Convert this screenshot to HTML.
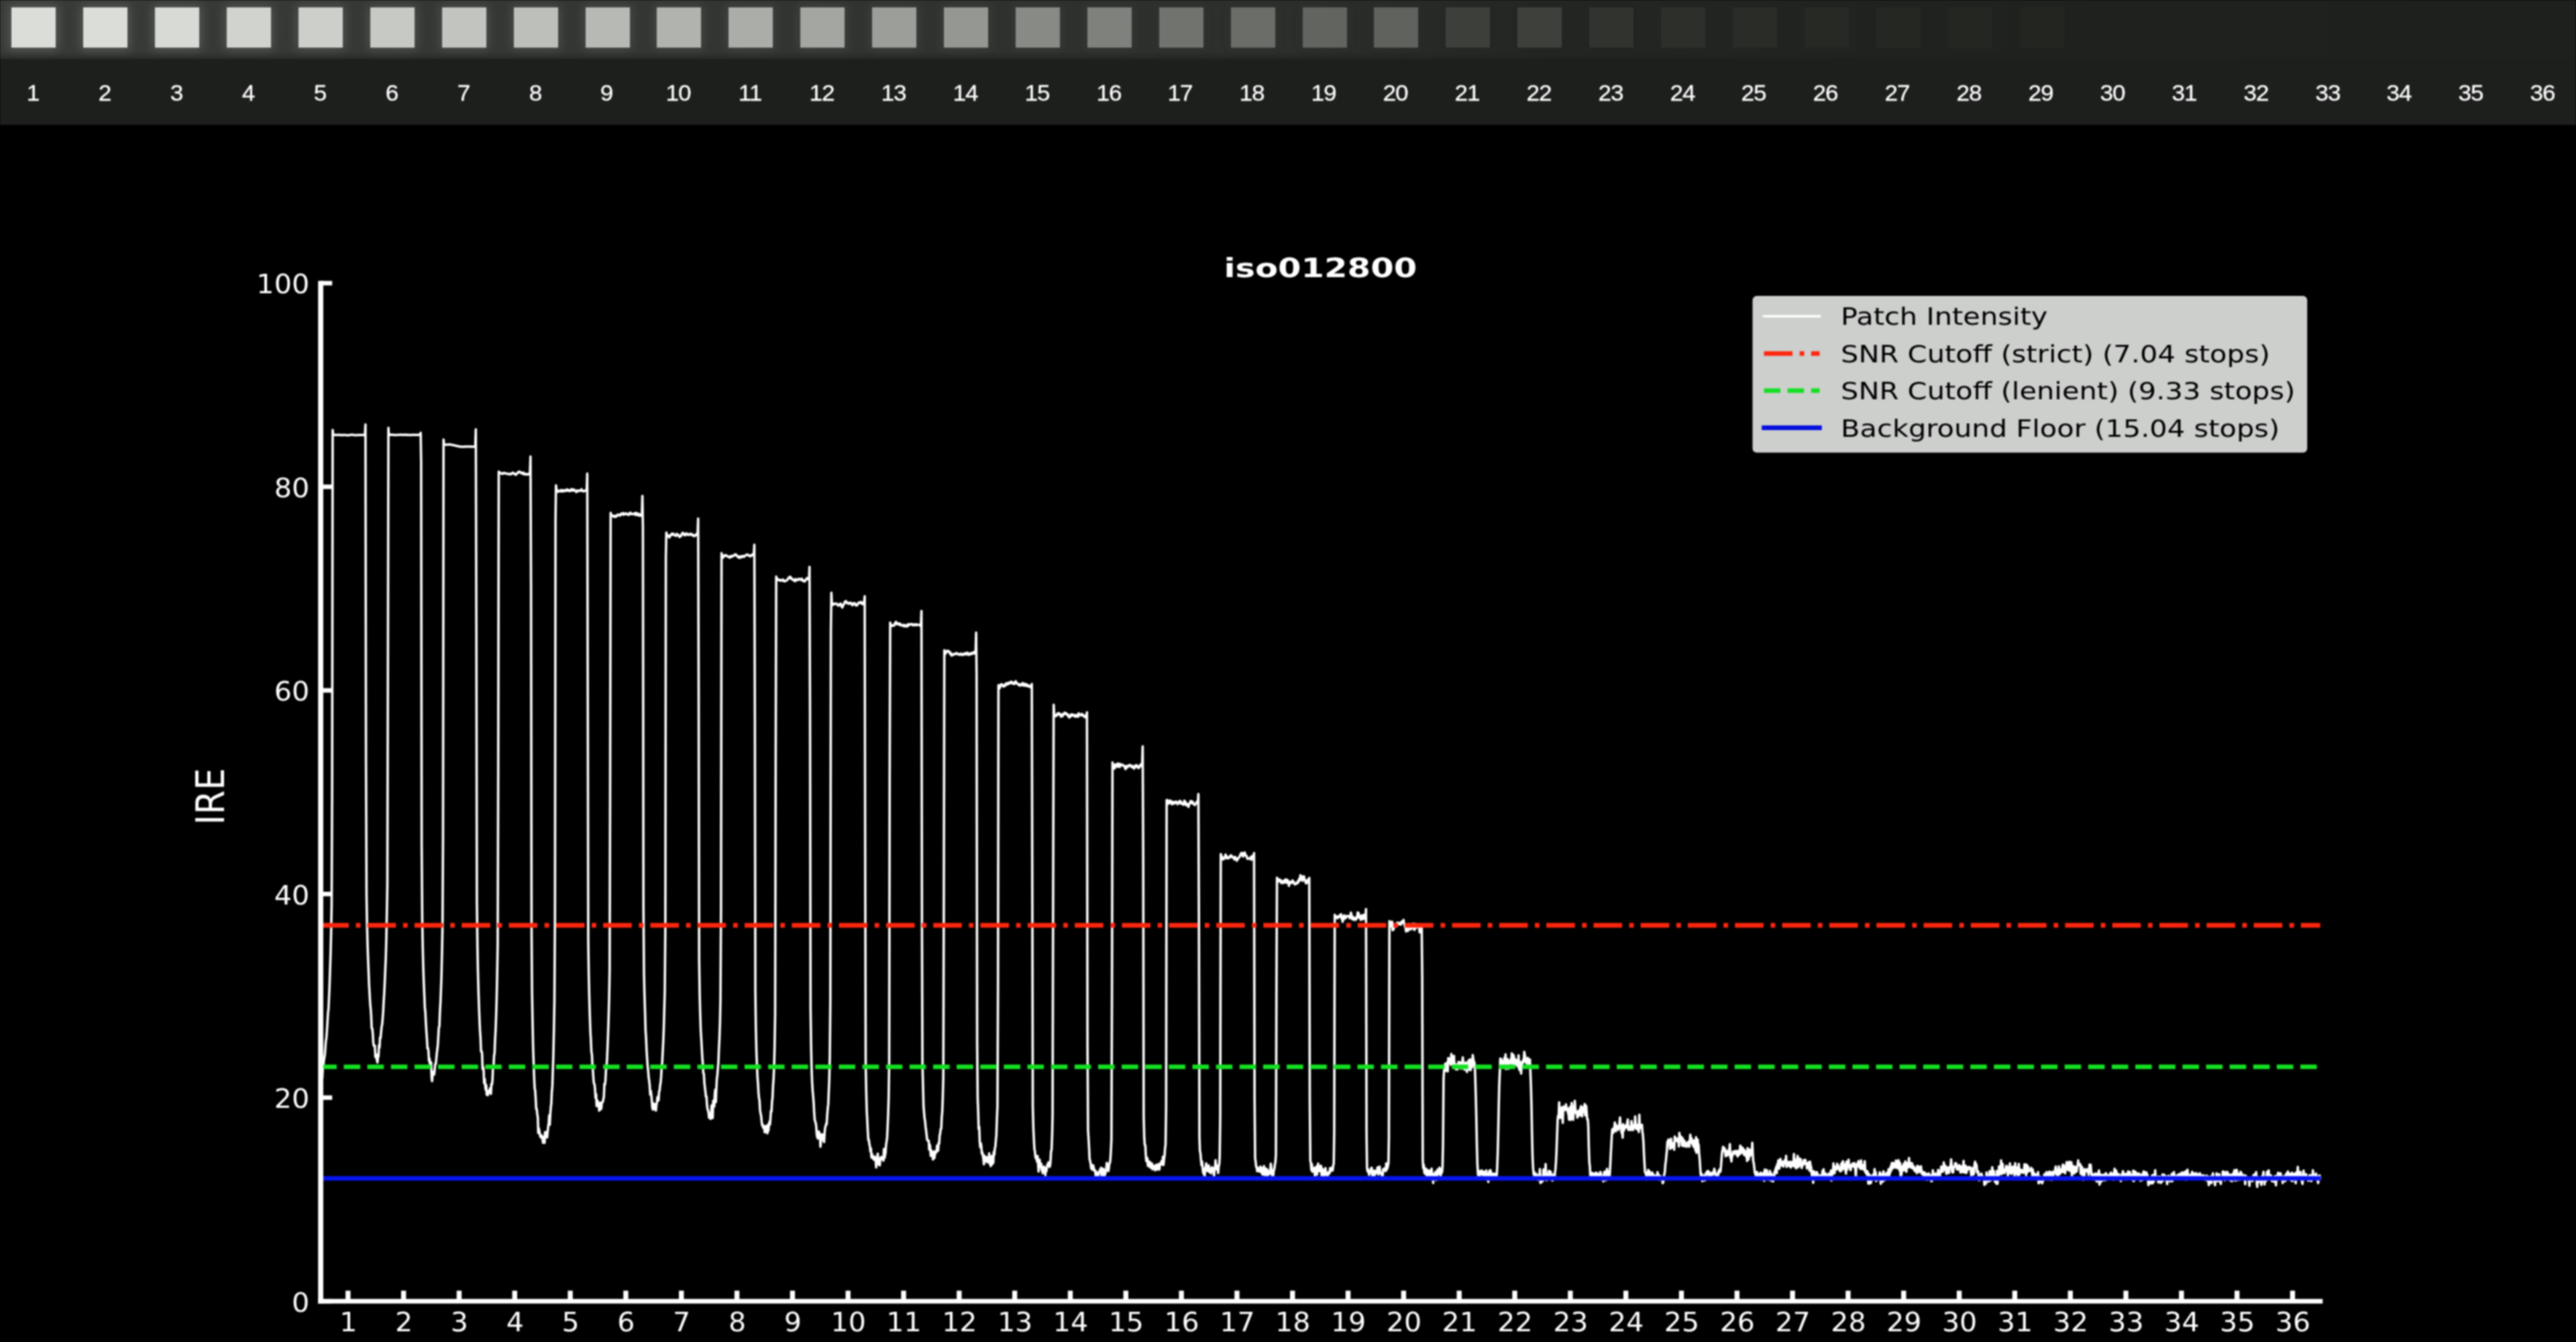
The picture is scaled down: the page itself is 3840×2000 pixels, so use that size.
<!DOCTYPE html>
<html lang="en"><head><meta charset="utf-8"><title>iso012800</title>
<style>
html,body{margin:0;padding:0;background:#000;}
body{width:3840px;height:2000px;position:relative;overflow:hidden;font-family:"Liberation Sans",sans-serif;}
.strip{position:absolute;left:0;top:0;width:3840px;height:185.5px;background:#1d1f1d;overflow:hidden;}
.strip .top{position:absolute;left:0;top:0;width:3840px;height:88px;background:linear-gradient(90deg,#383b38 0,#343634 25%,#2c2e2c 50%,#242624 60%,#202220 75%,#1e201e 100%);}
.strip .fade{position:absolute;left:0;top:77px;width:3840px;height:11px;background:linear-gradient(180deg,rgba(30,32,30,0),rgba(30,32,30,.55));}
.p{position:absolute;top:10.5px;width:66px;height:60px;}
.n{position:absolute;top:119px;width:80px;text-align:center;color:#fff;font-size:33.5px;line-height:40px;transform:scaleX(1.05);letter-spacing:-1px;-webkit-text-stroke:.3px #fff;}
.chart{position:absolute;left:0;top:0;filter:blur(.85px);}
.strip{filter:blur(.8px);}
</style></head><body>
<div class="strip"><div class="top"></div><div class="fade"></div>
<div class="p" style="left:17.3px;background:rgb(219,221,217);box-shadow:0 0 14px 3px rgba(219,221,217,0.21);"></div>
<div class="p" style="left:124.2px;background:rgb(219,221,217);box-shadow:0 0 14px 3px rgba(219,221,217,0.21);"></div>
<div class="p" style="left:231.1px;background:rgb(216,218,214);box-shadow:0 0 14px 3px rgba(216,218,214,0.21);"></div>
<div class="p" style="left:338.0px;background:rgb(209,211,207);box-shadow:0 0 14px 3px rgba(209,211,207,0.20);"></div>
<div class="p" style="left:444.9px;background:rgb(205,207,203);box-shadow:0 0 14px 3px rgba(205,207,203,0.20);"></div>
<div class="p" style="left:551.8px;background:rgb(199,201,197);box-shadow:0 0 14px 3px rgba(199,201,197,0.19);"></div>
<div class="p" style="left:658.7px;background:rgb(194,196,192);box-shadow:0 0 14px 3px rgba(194,196,192,0.18);"></div>
<div class="p" style="left:765.6px;background:rgb(189,191,187);box-shadow:0 0 14px 3px rgba(189,191,187,0.18);"></div>
<div class="p" style="left:872.5px;background:rgb(183,185,181);box-shadow:0 0 14px 3px rgba(183,185,181,0.17);"></div>
<div class="p" style="left:979.4px;background:rgb(177,179,175);box-shadow:0 0 14px 3px rgba(177,179,175,0.16);"></div>
<div class="p" style="left:1086.3px;background:rgb(171,173,169);box-shadow:0 0 14px 3px rgba(171,173,169,0.15);"></div>
<div class="p" style="left:1193.2px;background:rgb(164,166,162);box-shadow:0 0 14px 3px rgba(164,166,162,0.15);"></div>
<div class="p" style="left:1300.1px;background:rgb(156,158,154);box-shadow:0 0 14px 3px rgba(156,158,154,0.14);"></div>
<div class="p" style="left:1407.0px;background:rgb(149,151,147);box-shadow:0 0 14px 3px rgba(149,151,147,0.13);"></div>
<div class="p" style="left:1513.9px;background:rgb(136,138,134);box-shadow:0 0 14px 3px rgba(136,138,134,0.11);"></div>
<div class="p" style="left:1620.8px;background:rgb(127,129,125);box-shadow:0 0 14px 3px rgba(127,129,125,0.10);"></div>
<div class="p" style="left:1727.7px;background:rgb(113,115,111);box-shadow:0 0 14px 3px rgba(113,115,111,0.08);"></div>
<div class="p" style="left:1834.6px;background:rgb(107,109,105);box-shadow:0 0 14px 3px rgba(107,109,105,0.08);"></div>
<div class="p" style="left:1941.5px;background:rgb(98,100,96);box-shadow:0 0 14px 3px rgba(98,100,96,0.07);"></div>
<div class="p" style="left:2048.4px;background:rgb(96,98,94);box-shadow:0 0 14px 3px rgba(96,98,94,0.06);"></div>
<div class="p" style="left:2155.3px;background:rgb(61,63,59);box-shadow:0 0 14px 3px rgba(61,63,59,0.02);"></div>
<div class="p" style="left:2262.2px;background:rgb(62,64,60);box-shadow:0 0 14px 3px rgba(62,64,60,0.02);"></div>
<div class="p" style="left:2369.1px;background:rgb(49,51,47);box-shadow:0 0 14px 3px rgba(49,51,47,0.01);"></div>
<div class="p" style="left:2476.0px;background:rgb(45,47,43);"></div>
<div class="p" style="left:2582.9px;background:rgb(42,44,40);"></div>
<div class="p" style="left:2689.8px;background:rgb(39,41,37);"></div>
<div class="p" style="left:2796.7px;background:rgb(37,39,35);"></div>
<div class="p" style="left:2903.6px;background:rgb(36,38,34);"></div>
<div class="p" style="left:3010.5px;background:rgb(35,37,33);"></div>
<span class="n" style="left:9.3px">1</span>
<span class="n" style="left:116.2px">2</span>
<span class="n" style="left:223.1px">3</span>
<span class="n" style="left:329.9px">4</span>
<span class="n" style="left:436.8px">5</span>
<span class="n" style="left:543.7px">6</span>
<span class="n" style="left:650.6px">7</span>
<span class="n" style="left:757.5px">8</span>
<span class="n" style="left:864.3px">9</span>
<span class="n" style="left:971.2px">10</span>
<span class="n" style="left:1078.1px">11</span>
<span class="n" style="left:1185.0px">12</span>
<span class="n" style="left:1291.9px">13</span>
<span class="n" style="left:1398.7px">14</span>
<span class="n" style="left:1505.6px">15</span>
<span class="n" style="left:1612.5px">16</span>
<span class="n" style="left:1719.4px">17</span>
<span class="n" style="left:1826.3px">18</span>
<span class="n" style="left:1933.1px">19</span>
<span class="n" style="left:2040.0px">20</span>
<span class="n" style="left:2146.9px">21</span>
<span class="n" style="left:2253.8px">22</span>
<span class="n" style="left:2360.7px">23</span>
<span class="n" style="left:2467.5px">24</span>
<span class="n" style="left:2574.4px">25</span>
<span class="n" style="left:2681.3px">26</span>
<span class="n" style="left:2788.2px">27</span>
<span class="n" style="left:2895.1px">28</span>
<span class="n" style="left:3001.9px">29</span>
<span class="n" style="left:3108.8px">30</span>
<span class="n" style="left:3215.7px">31</span>
<span class="n" style="left:3322.6px">32</span>
<span class="n" style="left:3429.5px">33</span>
<span class="n" style="left:3536.3px">34</span>
<span class="n" style="left:3643.2px">35</span>
<span class="n" style="left:3750.1px">36</span>
</div>
<svg class="chart" width="3840" height="2000" viewBox="0 0 3840 2000">
<path d="M477.3,1611.8 478.1,1609.3 478.9,1594.7 479.6,1594.8 480.4,1606.8 481.2,1592.1 482.0,1588.9 482.7,1581.1 483.5,1576.5 484.3,1571.7 485.1,1559.9 485.8,1551.0 486.6,1546.8 487.4,1535.4 488.2,1522.6 488.9,1509.8 489.7,1503.3 490.5,1486.4 491.3,1467.4 492.0,1445.8 492.8,1421.7 493.6,1389.5 494.4,1347.8 495.1,1179.1 495.9,640.8 496.7,648.2 497.5,648.2 498.3,648.3 499.0,648.3 499.8,648.1 500.6,648.2 501.4,648.3 502.1,648.2 502.9,648.2 503.7,648.1 504.5,648.1 505.2,648.1 506.0,648.3 506.8,648.2 507.6,648.4 508.3,648.3 509.1,648.4 509.9,648.3 510.7,648.4 511.4,648.3 512.2,648.4 513.0,648.3 513.8,648.3 514.5,648.3 515.3,648.4 516.1,648.5 516.9,648.5 517.7,648.6 518.4,648.7 519.2,648.6 520.0,648.5 520.8,648.5 521.5,648.3 522.3,648.2 523.1,648.1 523.9,648.0 524.6,647.9 525.4,648.0 526.2,648.0 527.0,648.2 527.7,648.4 528.5,648.5 529.3,648.5 530.1,648.6 530.8,648.5 531.6,648.5 532.4,648.4 533.2,648.3 533.9,648.3 534.7,648.2 535.5,648.4 536.3,648.4 537.1,648.3 537.8,648.2 538.6,648.2 539.4,648.1 540.2,648.2 540.9,648.2 541.7,648.4 542.5,648.5 543.3,648.3 544.0,648.3 544.8,632.6 545.6,1138.3 546.4,1333.7 547.1,1375.5 547.9,1406.9 548.7,1430.3 549.5,1449.6 550.2,1467.8 551.0,1481.6 551.8,1495.6 552.6,1503.7 553.3,1513.7 554.1,1532.5 554.9,1532.7 555.7,1539.9 556.5,1554.2 557.2,1558.3 558.0,1559.2 558.8,1558.5 559.6,1575.4 560.3,1571.5 561.1,1571.5 561.9,1580.1 562.7,1583.3 563.4,1575.5 564.2,1574.6 565.0,1557.6 565.8,1561.2 566.5,1546.0 567.3,1547.2 568.1,1538.0 568.9,1530.1 569.6,1527.3 570.4,1518.6 571.2,1508.2 572.0,1492.1 572.7,1481.4 573.5,1465.1 574.3,1445.9 575.1,1427.5 575.9,1398.6 576.6,1366.0 577.4,1319.7 578.2,1018.7 579.0,637.5 579.7,648.1 580.5,648.2 581.3,648.2 582.1,648.0 582.8,647.9 583.6,648.0 584.4,647.9 585.2,647.9 585.9,648.1 586.7,648.2 587.5,648.1 588.3,648.2 589.0,648.4 589.8,648.3 590.6,648.2 591.4,648.2 592.1,648.2 592.9,648.1 593.7,648.0 594.5,648.0 595.3,648.1 596.0,647.9 596.8,648.0 597.6,648.0 598.4,647.9 599.1,647.9 599.9,648.2 600.7,648.1 601.5,647.9 602.2,648.1 603.0,648.0 603.8,647.9 604.6,647.8 605.3,648.1 606.1,648.1 606.9,648.1 607.7,648.1 608.4,648.2 609.2,648.1 610.0,648.2 610.8,648.3 611.5,648.4 612.3,648.4 613.1,648.2 613.9,648.2 614.7,648.1 615.4,647.9 616.2,648.0 617.0,648.2 617.8,648.2 618.5,648.1 619.3,648.3 620.1,648.2 620.9,648.1 621.6,648.1 622.4,648.2 623.2,648.1 624.0,648.1 624.7,648.0 625.5,648.0 626.3,648.0 627.1,645.0 627.8,689.0 628.6,1259.2 629.4,1367.8 630.2,1410.2 630.9,1439.3 631.7,1463.1 632.5,1481.8 633.3,1501.5 634.1,1509.0 634.8,1523.4 635.6,1536.9 636.4,1547.8 637.2,1562.5 637.9,1561.7 638.7,1566.5 639.5,1581.1 640.3,1577.6 641.0,1587.3 641.8,1589.1 642.6,1583.2 643.4,1606.0 644.1,1611.2 644.9,1601.9 645.7,1601.1 646.5,1597.1 647.2,1601.4 648.0,1593.6 648.8,1585.8 649.6,1585.7 650.3,1579.2 651.1,1570.0 651.9,1564.1 652.7,1556.7 653.5,1542.9 654.2,1531.0 655.0,1529.9 655.8,1508.4 656.6,1493.5 657.3,1476.4 658.1,1454.8 658.9,1419.9 659.7,1378.4 660.4,1252.8 661.2,655.1 662.0,662.7 662.8,662.5 663.5,662.7 664.3,662.7 665.1,662.7 665.9,662.7 666.6,662.8 667.4,662.5 668.2,662.5 669.0,662.5 669.7,662.4 670.5,662.3 671.3,662.6 672.1,662.8 672.9,662.8 673.6,663.0 674.4,663.2 675.2,663.3 676.0,663.4 676.7,663.6 677.5,663.8 678.3,664.1 679.1,664.3 679.8,664.3 680.6,664.6 681.4,664.8 682.2,664.9 682.9,665.1 683.7,665.3 684.5,665.4 685.3,665.5 686.0,665.7 686.8,665.5 687.6,665.7 688.4,665.7 689.1,665.7 689.9,665.7 690.7,665.9 691.5,665.8 692.3,665.8 693.0,665.6 693.8,665.6 694.6,665.6 695.4,665.6 696.1,665.5 696.9,665.5 697.7,665.5 698.5,665.6 699.2,665.5 700.0,665.5 700.8,665.6 701.6,665.6 702.3,665.6 703.1,665.5 703.9,665.7 704.7,665.7 705.4,665.7 706.2,665.7 707.0,665.8 707.8,665.9 708.5,665.8 709.3,639.9 710.1,937.1 710.9,1344.5 711.7,1409.4 712.4,1446.2 713.2,1475.2 714.0,1499.2 714.8,1519.8 715.5,1535.2 716.3,1546.7 717.1,1567.0 717.9,1566.6 718.6,1569.8 719.4,1593.1 720.2,1590.3 721.0,1596.3 721.7,1614.1 722.5,1608.0 723.3,1617.9 724.1,1623.9 724.8,1617.0 725.6,1631.7 726.4,1627.8 727.2,1632.0 727.9,1629.3 728.7,1626.0 729.5,1625.5 730.3,1622.9 731.1,1621.5 731.8,1630.2 732.6,1615.2 733.4,1616.4 734.2,1608.8 734.9,1590.4 735.7,1590.4 736.5,1573.4 737.3,1569.0 738.0,1549.8 738.8,1535.2 739.6,1513.6 740.4,1486.7 741.1,1454.1 741.9,1407.2 742.7,1147.0 743.5,702.9 744.2,705.4 745.0,705.2 745.8,704.5 746.6,705.2 747.3,705.5 748.1,706.2 748.9,705.7 749.7,706.0 750.5,704.8 751.2,704.9 752.0,705.0 752.8,705.2 753.6,705.7 754.3,705.6 755.1,705.7 755.9,705.8 756.7,706.2 757.4,706.3 758.2,706.8 759.0,706.5 759.8,706.6 760.5,706.8 761.3,705.8 762.1,706.7 762.9,705.7 763.6,705.2 764.4,704.4 765.2,705.1 766.0,705.3 766.7,705.7 767.5,707.0 768.3,707.4 769.1,707.4 769.9,706.0 770.6,705.9 771.4,705.6 772.2,703.6 773.0,703.8 773.7,703.4 774.5,702.9 775.3,703.5 776.1,704.5 776.8,704.3 777.6,705.6 778.4,705.1 779.2,705.5 779.9,704.3 780.7,706.6 781.5,705.3 782.3,706.9 783.0,706.9 783.8,706.7 784.6,706.3 785.4,707.1 786.1,706.7 786.9,706.9 787.7,707.0 788.5,705.7 789.3,705.9 790.0,705.0 790.8,680.4 791.6,872.4 792.4,1384.1 793.1,1479.1 793.9,1522.8 794.7,1560.8 795.5,1584.0 796.2,1605.0 797.0,1621.4 797.8,1625.6 798.6,1638.1 799.3,1652.6 800.1,1652.8 800.9,1660.5 801.7,1665.3 802.4,1688.5 803.2,1681.6 804.0,1686.5 804.8,1690.1 805.5,1693.8 806.3,1695.0 807.1,1692.0 807.9,1695.8 808.7,1695.7 809.4,1703.0 810.2,1694.3 811.0,1693.8 811.8,1703.1 812.5,1687.4 813.3,1687.5 814.1,1687.4 814.9,1687.5 815.6,1695.1 816.4,1686.2 817.2,1678.9 818.0,1673.2 818.7,1662.3 819.5,1676.3 820.3,1660.2 821.1,1650.0 821.8,1645.0 822.6,1627.4 823.4,1618.4 824.2,1593.1 824.9,1572.6 825.7,1535.7 826.5,1491.0 827.3,1363.7 828.1,775.9 828.8,723.3 829.6,730.5 830.4,730.3 831.2,731.4 831.9,733.0 832.7,732.3 833.5,732.1 834.3,731.5 835.0,731.9 835.8,730.3 836.6,732.2 837.4,731.9 838.1,732.6 838.9,730.5 839.7,731.7 840.5,730.6 841.2,731.9 842.0,731.8 842.8,731.8 843.6,730.4 844.3,731.4 845.1,729.4 845.9,731.1 846.7,730.1 847.5,730.4 848.2,731.6 849.0,731.9 849.8,731.7 850.6,730.1 851.3,731.1 852.1,729.1 852.9,729.7 853.7,731.2 854.4,729.4 855.2,730.7 856.0,730.0 856.8,731.3 857.5,731.3 858.3,731.9 859.1,733.4 859.9,732.1 860.6,730.9 861.4,731.6 862.2,731.9 863.0,731.4 863.7,731.3 864.5,731.1 865.3,731.5 866.1,730.7 866.9,729.1 867.6,730.7 868.4,731.7 869.2,731.7 870.0,732.4 870.7,731.6 871.5,731.7 872.3,731.0 873.1,731.2 873.8,731.5 874.6,731.2 875.4,705.8 876.2,1057.1 876.9,1402.7 877.7,1453.9 878.5,1488.2 879.3,1514.5 880.0,1535.1 880.8,1549.4 881.6,1567.3 882.4,1571.8 883.1,1587.9 883.9,1595.5 884.7,1609.1 885.5,1614.9 886.3,1616.1 887.0,1623.1 887.8,1636.5 888.6,1630.7 889.4,1648.4 890.1,1639.7 890.9,1641.3 891.7,1644.0 892.5,1644.2 893.2,1655.3 894.0,1649.7 894.8,1643.4 895.6,1653.0 896.3,1652.2 897.1,1643.6 897.9,1642.6 898.7,1641.9 899.4,1638.2 900.2,1634.3 901.0,1615.3 901.8,1616.4 902.5,1610.4 903.3,1595.1 904.1,1590.8 904.9,1578.5 905.7,1560.0 906.4,1542.0 907.2,1518.6 908.0,1489.9 908.8,1445.2 909.5,1175.4 910.3,764.4 911.1,767.3 911.9,768.3 912.6,768.1 913.4,768.8 914.2,769.7 915.0,768.7 915.7,768.7 916.5,770.5 917.3,768.9 918.1,769.4 918.8,769.8 919.6,768.9 920.4,767.0 921.2,767.7 921.9,767.3 922.7,767.6 923.5,767.3 924.3,768.3 925.1,766.5 925.8,765.6 926.6,766.6 927.4,765.3 928.2,766.1 928.9,764.9 929.7,767.1 930.5,765.1 931.3,765.7 932.0,766.2 932.8,766.3 933.6,765.2 934.4,765.6 935.1,766.5 935.9,766.9 936.7,767.4 937.5,767.0 938.2,765.1 939.0,765.9 939.8,764.0 940.6,766.2 941.3,766.2 942.1,766.2 942.9,766.0 943.7,766.2 944.5,765.8 945.2,765.9 946.0,764.8 946.8,766.1 947.6,767.5 948.3,764.3 949.1,765.3 949.9,767.2 950.7,766.5 951.4,765.4 952.2,768.5 953.0,768.0 953.8,766.6 954.5,767.1 955.3,768.5 956.1,767.5 956.9,767.6 957.6,739.0 958.4,786.0 959.2,1351.7 960.0,1451.6 960.7,1480.8 961.5,1506.6 962.3,1534.8 963.1,1547.4 963.9,1565.7 964.6,1576.6 965.4,1588.5 966.2,1596.2 967.0,1606.4 967.7,1610.3 968.5,1617.9 969.3,1631.3 970.1,1625.7 970.8,1631.1 971.6,1639.1 972.4,1650.8 973.2,1653.6 973.9,1644.5 974.7,1653.1 975.5,1645.2 976.3,1646.3 977.0,1646.3 977.8,1655.0 978.6,1645.9 979.4,1642.5 980.1,1635.5 980.9,1634.1 981.7,1639.9 982.5,1626.5 983.3,1625.2 984.0,1617.7 984.8,1613.4 985.6,1603.9 986.4,1587.8 987.1,1584.5 987.9,1568.3 988.7,1553.0 989.5,1532.9 990.2,1506.6 991.0,1476.6 991.8,1383.5 992.6,830.1 993.3,793.7 994.1,796.8 994.9,797.5 995.7,798.6 996.4,798.9 997.2,800.5 998.0,800.9 998.8,797.8 999.5,798.2 1000.3,797.2 1001.1,795.7 1001.9,797.2 1002.7,795.3 1003.4,795.5 1004.2,795.8 1005.0,797.3 1005.8,797.5 1006.5,797.5 1007.3,798.6 1008.1,798.2 1008.9,795.7 1009.6,796.9 1010.4,796.9 1011.2,797.1 1012.0,798.7 1012.7,800.2 1013.5,799.9 1014.3,799.4 1015.1,799.0 1015.8,796.6 1016.6,796.5 1017.4,794.2 1018.2,794.8 1018.9,794.7 1019.7,796.8 1020.5,797.7 1021.3,797.7 1022.1,796.1 1022.8,795.1 1023.6,796.7 1024.4,795.3 1025.2,796.3 1025.9,797.2 1026.7,797.0 1027.5,796.9 1028.3,796.6 1029.0,795.5 1029.8,796.6 1030.6,796.0 1031.4,797.5 1032.1,796.6 1032.9,797.1 1033.7,798.6 1034.5,798.9 1035.2,798.9 1036.0,797.9 1036.8,798.3 1037.6,796.4 1038.3,796.1 1039.1,795.9 1039.9,796.5 1040.7,772.9 1041.5,1025.3 1042.2,1428.4 1043.0,1480.4 1043.8,1511.6 1044.6,1535.6 1045.3,1546.7 1046.1,1561.2 1046.9,1575.3 1047.7,1585.7 1048.4,1599.0 1049.2,1600.1 1050.0,1613.6 1050.8,1620.8 1051.5,1626.5 1052.3,1634.2 1053.1,1634.0 1053.9,1646.3 1054.6,1652.2 1055.4,1654.9 1056.2,1657.7 1057.0,1665.7 1057.7,1663.6 1058.5,1661.7 1059.3,1667.5 1060.1,1658.3 1060.9,1647.2 1061.6,1652.3 1062.4,1666.2 1063.2,1640.5 1064.0,1645.1 1064.7,1649.0 1065.5,1631.4 1066.3,1623.8 1067.1,1642.4 1067.8,1623.3 1068.6,1608.2 1069.4,1601.8 1070.2,1591.2 1070.9,1583.6 1071.7,1563.0 1072.5,1546.8 1073.3,1523.7 1074.0,1489.1 1074.8,1358.4 1075.6,824.2 1076.4,829.5 1077.1,830.1 1077.9,830.9 1078.7,829.0 1079.5,828.1 1080.3,827.4 1081.0,828.3 1081.8,828.0 1082.6,827.5 1083.4,828.6 1084.1,829.2 1084.9,829.3 1085.7,829.8 1086.5,829.6 1087.2,830.9 1088.0,830.4 1088.8,829.1 1089.6,830.3 1090.3,828.5 1091.1,829.4 1091.9,829.3 1092.7,828.2 1093.4,828.1 1094.2,828.1 1095.0,826.7 1095.8,826.5 1096.5,826.1 1097.3,827.3 1098.1,827.4 1098.9,829.1 1099.7,829.9 1100.4,829.3 1101.2,829.9 1102.0,831.4 1102.8,829.7 1103.5,829.1 1104.3,830.8 1105.1,830.6 1105.9,829.4 1106.6,828.6 1107.4,829.6 1108.2,828.6 1109.0,829.6 1109.7,829.3 1110.5,828.5 1111.3,828.0 1112.1,827.2 1112.8,826.6 1113.6,826.6 1114.4,826.6 1115.2,826.9 1115.9,827.9 1116.7,827.8 1117.5,828.8 1118.3,828.7 1119.1,828.9 1119.8,827.8 1120.6,827.2 1121.4,826.3 1122.2,827.4 1122.9,826.6 1123.7,827.2 1124.5,811.7 1125.3,1065.0 1126.0,1476.9 1126.8,1534.1 1127.6,1567.9 1128.4,1587.4 1129.1,1604.1 1129.9,1614.6 1130.7,1628.7 1131.5,1636.8 1132.2,1639.7 1133.0,1654.7 1133.8,1659.4 1134.6,1663.0 1135.3,1670.5 1136.1,1677.1 1136.9,1675.9 1137.7,1680.7 1138.5,1678.6 1139.2,1680.4 1140.0,1687.5 1140.8,1678.5 1141.6,1678.1 1142.3,1679.2 1143.1,1686.9 1143.9,1688.8 1144.7,1676.3 1145.4,1685.3 1146.2,1676.8 1147.0,1671.8 1147.8,1675.9 1148.5,1666.7 1149.3,1655.5 1150.1,1656.5 1150.9,1641.1 1151.6,1636.3 1152.4,1618.0 1153.2,1607.2 1154.0,1587.4 1154.7,1561.1 1155.5,1510.4 1156.3,1134.5 1157.1,859.3 1157.9,863.8 1158.6,862.1 1159.4,864.3 1160.2,864.3 1161.0,864.5 1161.7,864.7 1162.5,863.9 1163.3,865.4 1164.1,864.9 1164.8,864.8 1165.6,864.8 1166.4,865.1 1167.2,863.6 1167.9,865.5 1168.7,866.3 1169.5,866.1 1170.3,866.2 1171.0,865.9 1171.8,865.2 1172.6,864.8 1173.4,864.6 1174.1,863.5 1174.9,862.3 1175.7,861.1 1176.5,860.3 1177.3,859.7 1178.0,859.6 1178.8,862.1 1179.6,861.4 1180.4,862.3 1181.1,863.4 1181.9,864.2 1182.7,864.6 1183.5,864.1 1184.2,863.8 1185.0,866.2 1185.8,863.0 1186.6,864.5 1187.3,864.6 1188.1,864.6 1188.9,864.5 1189.7,863.3 1190.4,862.6 1191.2,863.4 1192.0,863.8 1192.8,863.5 1193.5,863.3 1194.3,864.1 1195.1,862.4 1195.9,864.9 1196.7,865.6 1197.4,865.2 1198.2,865.1 1199.0,866.5 1199.8,866.4 1200.5,864.8 1201.3,864.2 1202.1,863.2 1202.9,861.5 1203.6,862.4 1204.4,862.7 1205.2,863.1 1206.0,864.4 1206.7,844.9 1207.5,1061.2 1208.3,1500.9 1209.1,1559.2 1209.8,1590.6 1210.6,1612.6 1211.4,1625.3 1212.2,1634.3 1212.9,1642.8 1213.7,1658.5 1214.5,1668.9 1215.3,1671.6 1216.1,1673.9 1216.8,1679.7 1217.6,1691.1 1218.4,1695.0 1219.2,1696.6 1219.9,1693.1 1220.7,1686.3 1221.5,1689.8 1222.3,1690.1 1223.0,1709.0 1223.8,1700.9 1224.6,1695.7 1225.4,1690.5 1226.1,1696.4 1226.9,1691.1 1227.7,1698.8 1228.5,1701.9 1229.2,1689.0 1230.0,1680.7 1230.8,1678.1 1231.6,1674.8 1232.3,1675.5 1233.1,1662.0 1233.9,1652.2 1234.7,1645.4 1235.5,1625.3 1236.2,1608.7 1237.0,1574.4 1237.8,1489.2 1238.6,940.7 1239.3,883.4 1240.1,900.4 1240.9,901.2 1241.7,901.5 1242.4,899.7 1243.2,899.8 1244.0,899.9 1244.8,900.1 1245.5,899.5 1246.3,899.5 1247.1,899.7 1247.9,900.8 1248.6,901.5 1249.4,902.5 1250.2,901.6 1251.0,901.6 1251.7,900.2 1252.5,900.6 1253.3,899.6 1254.1,902.9 1254.9,904.4 1255.6,905.3 1256.4,903.3 1257.2,901.3 1258.0,900.4 1258.7,898.9 1259.5,896.8 1260.3,897.7 1261.1,895.8 1261.8,897.9 1262.6,898.6 1263.4,898.8 1264.2,898.5 1264.9,899.8 1265.7,898.9 1266.5,898.3 1267.3,898.4 1268.0,899.6 1268.8,899.9 1269.6,899.0 1270.4,901.9 1271.1,901.6 1271.9,900.8 1272.7,899.2 1273.5,900.2 1274.3,899.0 1275.0,900.6 1275.8,902.3 1276.6,902.2 1277.4,902.3 1278.1,901.6 1278.9,899.6 1279.7,898.4 1280.5,898.4 1281.2,898.0 1282.0,897.5 1282.8,898.8 1283.6,897.4 1284.3,899.2 1285.1,899.4 1285.9,900.4 1286.7,900.0 1287.4,897.1 1288.2,898.7 1289.0,888.6 1289.8,1312.7 1290.5,1586.4 1291.3,1627.7 1292.1,1656.2 1292.9,1670.9 1293.7,1687.4 1294.4,1698.9 1295.2,1698.6 1296.0,1705.5 1296.8,1708.3 1297.5,1716.0 1298.3,1711.7 1299.1,1725.0 1299.9,1719.8 1300.6,1724.7 1301.4,1726.7 1302.2,1724.8 1303.0,1728.3 1303.7,1723.5 1304.5,1724.9 1305.3,1728.0 1306.1,1739.8 1306.8,1730.9 1307.6,1728.7 1308.4,1719.2 1309.2,1729.4 1309.9,1735.4 1310.7,1735.4 1311.5,1736.7 1312.3,1725.8 1313.1,1727.9 1313.8,1724.2 1314.6,1725.7 1315.4,1725.1 1316.2,1727.2 1316.9,1729.7 1317.7,1712.2 1318.5,1725.8 1319.3,1721.6 1320.0,1718.3 1320.8,1706.5 1321.6,1701.3 1322.4,1694.9 1323.1,1681.0 1323.9,1662.2 1324.7,1637.0 1325.5,1582.1 1326.2,1164.2 1327.0,927.8 1327.8,933.0 1328.6,933.4 1329.3,931.8 1330.1,932.1 1330.9,932.1 1331.7,932.2 1332.5,932.5 1333.2,931.3 1334.0,928.8 1334.8,929.7 1335.6,926.8 1336.3,928.0 1337.1,930.2 1337.9,929.1 1338.7,929.5 1339.4,930.3 1340.2,929.2 1341.0,929.5 1341.8,931.7 1342.5,930.1 1343.3,931.7 1344.1,931.7 1344.9,932.2 1345.6,932.0 1346.4,931.5 1347.2,933.3 1348.0,931.4 1348.7,932.4 1349.5,933.4 1350.3,932.2 1351.1,932.8 1351.9,933.7 1352.6,931.6 1353.4,930.3 1354.2,932.4 1355.0,931.3 1355.7,930.2 1356.5,930.4 1357.3,930.8 1358.1,930.4 1358.8,929.9 1359.6,930.3 1360.4,931.6 1361.2,930.7 1361.9,931.8 1362.7,930.7 1363.5,930.8 1364.3,930.4 1365.0,931.9 1365.8,931.0 1366.6,930.5 1367.4,931.4 1368.1,930.9 1368.9,931.2 1369.7,931.2 1370.5,931.5 1371.3,931.3 1372.0,932.6 1372.8,931.6 1373.6,910.5 1374.4,1393.4 1375.1,1584.6 1375.9,1616.1 1376.7,1648.5 1377.5,1658.0 1378.2,1666.4 1379.0,1670.8 1379.8,1679.5 1380.6,1685.5 1381.3,1691.5 1382.1,1698.8 1382.9,1699.3 1383.7,1700.6 1384.4,1700.1 1385.2,1713.3 1386.0,1705.7 1386.8,1711.6 1387.5,1722.7 1388.3,1714.5 1389.1,1717.0 1389.9,1718.1 1390.7,1727.9 1391.4,1727.3 1392.2,1716.1 1393.0,1725.5 1393.8,1716.3 1394.5,1719.1 1395.3,1717.1 1396.1,1716.4 1396.9,1707.2 1397.6,1715.4 1398.4,1714.8 1399.2,1703.2 1400.0,1704.5 1400.7,1692.7 1401.5,1689.0 1402.3,1682.5 1403.1,1682.0 1403.8,1665.9 1404.6,1656.8 1405.4,1636.6 1406.2,1605.0 1406.9,1362.1 1407.7,969.1 1408.5,974.7 1409.3,974.5 1410.1,972.3 1410.8,971.8 1411.6,970.0 1412.4,969.9 1413.2,970.0 1413.9,970.8 1414.7,971.7 1415.5,971.4 1416.3,974.3 1417.0,975.2 1417.8,973.7 1418.6,977.1 1419.4,975.3 1420.1,976.1 1420.9,975.7 1421.7,975.2 1422.5,974.3 1423.2,974.9 1424.0,975.1 1424.8,974.2 1425.6,973.3 1426.3,973.4 1427.1,974.1 1427.9,974.7 1428.7,975.5 1429.5,974.6 1430.2,975.5 1431.0,975.2 1431.8,975.8 1432.6,974.2 1433.3,974.8 1434.1,975.6 1434.9,975.0 1435.7,976.1 1436.4,974.9 1437.2,975.2 1438.0,973.5 1438.8,974.3 1439.5,973.8 1440.3,975.5 1441.1,974.2 1441.9,972.6 1442.6,974.5 1443.4,973.9 1444.2,976.1 1445.0,974.4 1445.7,975.2 1446.5,973.9 1447.3,973.9 1448.1,974.8 1448.9,973.0 1449.6,973.6 1450.4,973.6 1451.2,972.2 1452.0,974.0 1452.7,971.9 1453.5,972.1 1454.3,973.1 1455.1,942.7 1455.8,1006.9 1456.6,1553.1 1457.4,1636.9 1458.2,1657.7 1458.9,1682.4 1459.7,1679.6 1460.5,1701.2 1461.3,1709.6 1462.0,1703.7 1462.8,1707.8 1463.6,1719.1 1464.4,1717.4 1465.1,1721.9 1465.9,1726.3 1466.7,1735.2 1467.5,1722.4 1468.3,1730.8 1469.0,1730.7 1469.8,1725.8 1470.6,1724.6 1471.4,1731.9 1472.1,1731.3 1472.9,1730.6 1473.7,1730.3 1474.5,1718.8 1475.2,1734.3 1476.0,1725.0 1476.8,1737.8 1477.6,1731.1 1478.3,1722.8 1479.1,1735.2 1479.9,1730.4 1480.7,1732.9 1481.4,1716.7 1482.2,1721.0 1483.0,1711.1 1483.8,1709.1 1484.5,1699.7 1485.3,1691.2 1486.1,1667.0 1486.9,1648.0 1487.7,1470.6 1488.4,1021.1 1489.2,1026.4 1490.0,1025.8 1490.8,1024.1 1491.5,1022.8 1492.3,1019.8 1493.1,1020.3 1493.9,1020.1 1494.6,1021.5 1495.4,1022.3 1496.2,1023.2 1497.0,1022.4 1497.7,1020.8 1498.5,1021.8 1499.3,1018.8 1500.1,1020.5 1500.8,1019.4 1501.6,1018.2 1502.4,1019.7 1503.2,1019.5 1503.9,1017.4 1504.7,1018.1 1505.5,1018.2 1506.3,1016.9 1507.1,1016.0 1507.8,1018.1 1508.6,1016.6 1509.4,1017.9 1510.2,1018.9 1510.9,1017.8 1511.7,1019.3 1512.5,1018.7 1513.3,1016.3 1514.0,1015.3 1514.8,1016.5 1515.6,1018.6 1516.4,1018.7 1517.1,1019.1 1517.9,1019.8 1518.7,1020.8 1519.5,1019.7 1520.2,1021.8 1521.0,1021.0 1521.8,1020.1 1522.6,1019.9 1523.3,1021.2 1524.1,1018.1 1524.9,1020.0 1525.7,1021.6 1526.5,1021.4 1527.2,1018.9 1528.0,1021.5 1528.8,1022.1 1529.6,1019.7 1530.3,1021.3 1531.1,1022.3 1531.9,1020.8 1532.7,1022.7 1533.4,1021.6 1534.2,1023.4 1535.0,1022.7 1535.8,1022.6 1536.5,1023.9 1537.3,1024.7 1538.1,1019.4 1538.9,1345.0 1539.6,1648.8 1540.4,1680.8 1541.2,1698.0 1542.0,1712.6 1542.7,1715.4 1543.5,1723.7 1544.3,1726.5 1545.1,1722.9 1545.9,1731.1 1546.6,1722.8 1547.4,1732.6 1548.2,1745.9 1549.0,1729.7 1549.7,1728.4 1550.5,1735.6 1551.3,1739.2 1552.1,1734.3 1552.8,1743.8 1553.6,1742.3 1554.4,1748.4 1555.2,1741.1 1555.9,1738.5 1556.7,1739.5 1557.5,1741.0 1558.3,1751.4 1559.0,1741.4 1559.8,1745.6 1560.6,1739.9 1561.4,1735.6 1562.1,1735.8 1562.9,1732.4 1563.7,1732.7 1564.5,1738.9 1565.3,1737.1 1566.0,1730.3 1566.8,1715.5 1567.6,1713.5 1568.4,1691.8 1569.1,1661.3 1569.9,1326.1 1570.7,1050.3 1571.5,1065.9 1572.2,1067.8 1573.0,1066.8 1573.8,1066.5 1574.6,1066.9 1575.3,1064.9 1576.1,1063.8 1576.9,1065.0 1577.7,1062.9 1578.4,1063.1 1579.2,1064.4 1580.0,1063.9 1580.8,1065.4 1581.5,1067.9 1582.3,1067.5 1583.1,1064.8 1583.9,1067.4 1584.7,1064.6 1585.4,1063.8 1586.2,1064.1 1587.0,1062.1 1587.8,1063.0 1588.5,1064.0 1589.3,1062.9 1590.1,1064.4 1590.9,1065.4 1591.6,1064.7 1592.4,1067.5 1593.2,1067.0 1594.0,1069.4 1594.7,1066.7 1595.5,1065.7 1596.3,1067.6 1597.1,1064.8 1597.8,1064.6 1598.6,1066.1 1599.4,1065.1 1600.2,1066.5 1600.9,1065.7 1601.7,1066.4 1602.5,1068.1 1603.3,1065.7 1604.1,1066.7 1604.8,1067.9 1605.6,1067.8 1606.4,1065.3 1607.2,1068.1 1607.9,1063.1 1608.7,1065.4 1609.5,1065.0 1610.3,1065.9 1611.0,1065.7 1611.8,1065.3 1612.6,1064.0 1613.4,1066.5 1614.1,1065.2 1614.9,1066.0 1615.7,1066.2 1616.5,1068.1 1617.2,1068.9 1618.0,1068.0 1618.8,1066.8 1619.6,1066.7 1620.3,1061.6 1621.1,1554.2 1621.9,1684.0 1622.7,1697.0 1623.5,1710.9 1624.2,1726.9 1625.0,1730.4 1625.8,1733.9 1626.6,1741.3 1627.3,1736.0 1628.1,1743.1 1628.9,1743.0 1629.7,1736.9 1630.4,1740.7 1631.2,1744.6 1632.0,1743.7 1632.8,1745.3 1633.5,1756.0 1634.3,1746.3 1635.1,1749.6 1635.9,1753.3 1636.6,1748.7 1637.4,1751.4 1638.2,1747.0 1639.0,1745.9 1639.7,1743.3 1640.5,1746.6 1641.3,1740.2 1642.1,1752.5 1642.9,1742.1 1643.6,1751.5 1644.4,1741.7 1645.2,1742.4 1646.0,1745.2 1646.7,1751.5 1647.5,1749.5 1648.3,1746.0 1649.1,1743.3 1649.8,1733.0 1650.6,1744.0 1651.4,1740.9 1652.2,1745.3 1652.9,1741.1 1653.7,1733.8 1654.5,1733.4 1655.3,1726.8 1656.0,1714.8 1656.8,1697.8 1657.6,1481.6 1658.4,1136.2 1659.1,1141.5 1659.9,1143.8 1660.7,1145.1 1661.5,1145.3 1662.3,1139.4 1663.0,1142.6 1663.8,1140.3 1664.6,1140.2 1665.4,1138.6 1666.1,1142.8 1666.9,1137.7 1667.7,1140.5 1668.5,1140.1 1669.2,1143.0 1670.0,1138.5 1670.8,1140.5 1671.6,1140.6 1672.3,1140.1 1673.1,1140.0 1673.9,1139.9 1674.7,1141.2 1675.4,1141.6 1676.2,1142.1 1677.0,1144.0 1677.8,1146.2 1678.5,1141.5 1679.3,1144.3 1680.1,1143.6 1680.9,1141.7 1681.7,1142.5 1682.4,1141.0 1683.2,1140.8 1684.0,1140.0 1684.8,1141.1 1685.5,1142.0 1686.3,1142.7 1687.1,1141.0 1687.9,1143.5 1688.6,1142.2 1689.4,1142.9 1690.2,1145.3 1691.0,1144.7 1691.7,1142.1 1692.5,1140.7 1693.3,1143.0 1694.1,1140.5 1694.8,1141.8 1695.6,1141.1 1696.4,1143.6 1697.2,1144.7 1697.9,1144.1 1698.7,1142.9 1699.5,1141.7 1700.3,1139.4 1701.1,1141.4 1701.8,1139.8 1702.6,1141.4 1703.4,1112.4 1704.2,1281.5 1704.9,1663.7 1705.7,1695.5 1706.5,1706.3 1707.3,1706.9 1708.0,1720.8 1708.8,1730.4 1709.6,1725.0 1710.4,1726.5 1711.1,1737.4 1711.9,1736.0 1712.7,1737.9 1713.5,1731.1 1714.2,1738.8 1715.0,1740.1 1715.8,1736.9 1716.6,1733.6 1717.3,1734.6 1718.1,1742.8 1718.9,1737.0 1719.7,1737.7 1720.5,1741.2 1721.2,1737.8 1722.0,1744.1 1722.8,1737.5 1723.6,1735.9 1724.3,1736.2 1725.1,1742.9 1725.9,1742.2 1726.7,1737.1 1727.4,1734.5 1728.2,1743.0 1729.0,1736.8 1729.8,1734.8 1730.5,1735.1 1731.3,1730.6 1732.1,1732.9 1732.9,1735.6 1733.6,1723.8 1734.4,1736.2 1735.2,1727.2 1736.0,1722.2 1736.7,1711.7 1737.5,1705.6 1738.3,1649.5 1739.1,1192.4 1739.9,1196.1 1740.6,1192.7 1741.4,1197.7 1742.2,1197.7 1743.0,1193.9 1743.7,1195.5 1744.5,1193.0 1745.3,1196.3 1746.1,1194.9 1746.8,1198.7 1747.6,1196.6 1748.4,1194.8 1749.2,1196.8 1749.9,1197.6 1750.7,1197.5 1751.5,1195.4 1752.3,1195.1 1753.0,1194.4 1753.8,1196.0 1754.6,1195.8 1755.4,1198.6 1756.1,1196.2 1756.9,1195.8 1757.7,1195.0 1758.5,1193.7 1759.3,1197.3 1760.0,1194.3 1760.8,1195.8 1761.6,1197.4 1762.4,1197.9 1763.1,1199.0 1763.9,1199.1 1764.7,1196.8 1765.5,1193.3 1766.2,1198.7 1767.0,1195.0 1767.8,1196.7 1768.6,1200.2 1769.3,1200.0 1770.1,1198.4 1770.9,1200.3 1771.7,1202.5 1772.4,1198.0 1773.2,1197.2 1774.0,1197.5 1774.8,1193.9 1775.5,1195.7 1776.3,1194.1 1777.1,1196.7 1777.9,1195.0 1778.7,1198.0 1779.4,1198.1 1780.2,1198.0 1781.0,1199.8 1781.8,1198.5 1782.5,1197.9 1783.3,1196.7 1784.1,1195.0 1784.9,1194.8 1785.6,1197.0 1786.4,1183.3 1787.2,1362.2 1788.0,1694.2 1788.7,1714.9 1789.5,1719.0 1790.3,1728.7 1791.1,1736.6 1791.8,1730.8 1792.6,1739.5 1793.4,1746.6 1794.2,1749.2 1794.9,1742.0 1795.7,1756.5 1796.5,1740.8 1797.3,1739.0 1798.1,1733.8 1798.8,1741.1 1799.6,1744.8 1800.4,1739.1 1801.2,1745.5 1801.9,1736.9 1802.7,1746.5 1803.5,1744.4 1804.3,1742.8 1805.0,1748.5 1805.8,1741.4 1806.6,1739.6 1807.4,1745.1 1808.1,1740.9 1808.9,1744.2 1809.7,1755.2 1810.5,1740.6 1811.2,1742.4 1812.0,1729.1 1812.8,1738.6 1813.6,1742.8 1814.3,1742.4 1815.1,1737.2 1815.9,1748.2 1816.7,1738.5 1817.5,1735.1 1818.2,1724.5 1819.0,1663.0 1819.8,1272.9 1820.6,1275.3 1821.3,1276.6 1822.1,1279.5 1822.9,1280.7 1823.7,1280.8 1824.4,1278.2 1825.2,1278.0 1826.0,1278.1 1826.8,1273.5 1827.5,1279.0 1828.3,1275.7 1829.1,1277.9 1829.9,1278.8 1830.6,1279.1 1831.4,1278.4 1832.2,1278.7 1833.0,1276.4 1833.7,1275.9 1834.5,1275.1 1835.3,1274.7 1836.1,1277.6 1836.9,1277.8 1837.6,1277.7 1838.4,1277.1 1839.2,1277.8 1840.0,1280.7 1840.7,1277.3 1841.5,1277.5 1842.3,1278.6 1843.1,1281.8 1843.8,1282.6 1844.6,1280.4 1845.4,1280.1 1846.2,1278.6 1846.9,1277.9 1847.7,1277.3 1848.5,1274.6 1849.3,1274.1 1850.0,1271.5 1850.8,1271.1 1851.6,1272.3 1852.4,1275.0 1853.1,1276.4 1853.9,1271.2 1854.7,1273.1 1855.5,1270.5 1856.3,1274.8 1857.0,1274.3 1857.8,1275.0 1858.6,1277.1 1859.4,1279.7 1860.1,1279.3 1860.9,1279.9 1861.7,1279.4 1862.5,1279.5 1863.2,1279.3 1864.0,1280.0 1864.8,1277.1 1865.6,1281.3 1866.3,1276.0 1867.1,1275.8 1867.9,1276.5 1868.7,1276.7 1869.4,1271.4 1870.2,1637.0 1871.0,1726.2 1871.8,1731.5 1872.5,1738.9 1873.3,1738.9 1874.1,1745.5 1874.9,1740.4 1875.7,1742.8 1876.4,1742.1 1877.2,1746.0 1878.0,1743.4 1878.8,1738.6 1879.5,1743.4 1880.3,1747.4 1881.1,1740.7 1881.9,1750.3 1882.6,1749.4 1883.4,1744.7 1884.2,1737.8 1885.0,1751.1 1885.7,1743.2 1886.5,1744.7 1887.3,1741.6 1888.1,1747.1 1888.8,1756.9 1889.6,1743.3 1890.4,1747.5 1891.2,1750.3 1891.9,1747.5 1892.7,1747.8 1893.5,1748.9 1894.3,1734.2 1895.1,1740.6 1895.8,1747.7 1896.6,1753.6 1897.4,1756.5 1898.2,1749.9 1898.9,1743.9 1899.7,1742.0 1900.5,1735.5 1901.3,1731.7 1902.0,1720.8 1902.8,1469.2 1903.6,1308.1 1904.4,1314.2 1905.1,1310.0 1905.9,1311.1 1906.7,1313.1 1907.5,1311.0 1908.2,1311.0 1909.0,1312.1 1909.8,1315.9 1910.6,1313.7 1911.3,1315.4 1912.1,1313.3 1912.9,1316.1 1913.7,1312.5 1914.5,1313.2 1915.2,1314.7 1916.0,1311.0 1916.8,1310.7 1917.6,1315.8 1918.3,1313.5 1919.1,1311.4 1919.9,1312.2 1920.7,1315.7 1921.4,1320.2 1922.2,1314.8 1923.0,1316.6 1923.8,1314.1 1924.5,1314.5 1925.3,1315.5 1926.1,1315.7 1926.9,1312.2 1927.6,1313.6 1928.4,1315.2 1929.2,1315.1 1930.0,1317.9 1930.7,1317.9 1931.5,1317.3 1932.3,1317.2 1933.1,1316.4 1933.9,1314.4 1934.6,1316.0 1935.4,1312.4 1936.2,1313.5 1937.0,1309.2 1937.7,1312.1 1938.5,1304.4 1939.3,1305.6 1940.1,1309.2 1940.8,1307.3 1941.6,1312.6 1942.4,1310.6 1943.2,1305.9 1943.9,1306.3 1944.7,1311.2 1945.5,1311.5 1946.3,1315.1 1947.0,1316.5 1947.8,1312.8 1948.6,1315.3 1949.4,1312.1 1950.1,1310.6 1950.9,1312.7 1951.7,1308.3 1952.5,1640.7 1953.3,1730.3 1954.0,1732.1 1954.8,1743.7 1955.6,1734.9 1956.4,1746.3 1957.1,1741.5 1957.9,1744.4 1958.7,1744.7 1959.5,1740.2 1960.2,1755.0 1961.0,1742.6 1961.8,1745.9 1962.6,1738.3 1963.3,1750.5 1964.1,1743.6 1964.9,1734.1 1965.7,1741.9 1966.4,1743.1 1967.2,1745.3 1968.0,1743.0 1968.8,1737.4 1969.5,1738.1 1970.3,1755.4 1971.1,1746.3 1971.9,1742.5 1972.7,1756.6 1973.4,1749.0 1974.2,1755.8 1975.0,1748.9 1975.8,1740.7 1976.5,1747.6 1977.3,1750.2 1978.1,1747.6 1978.9,1752.2 1979.6,1750.5 1980.4,1749.6 1981.2,1746.5 1982.0,1748.4 1982.7,1740.9 1983.5,1745.4 1984.3,1744.8 1985.1,1742.1 1985.8,1740.1 1986.6,1744.3 1987.4,1736.7 1988.2,1734.3 1988.9,1687.7 1989.7,1363.4 1990.5,1368.2 1991.3,1365.9 1992.1,1365.8 1992.8,1366.1 1993.6,1368.5 1994.4,1367.2 1995.2,1365.6 1995.9,1365.2 1996.7,1366.3 1997.5,1365.4 1998.3,1363.1 1999.0,1362.4 1999.8,1369.1 2000.6,1366.1 2001.4,1373.7 2002.1,1370.9 2002.9,1365.2 2003.7,1364.1 2004.5,1366.5 2005.2,1368.9 2006.0,1367.1 2006.8,1366.9 2007.6,1364.9 2008.3,1365.5 2009.1,1365.5 2009.9,1365.9 2010.7,1366.5 2011.5,1365.0 2012.2,1368.6 2013.0,1365.7 2013.8,1360.1 2014.6,1363.2 2015.3,1368.3 2016.1,1370.1 2016.9,1366.6 2017.7,1370.2 2018.4,1370.6 2019.2,1368.1 2020.0,1370.6 2020.8,1369.7 2021.5,1370.5 2022.3,1366.7 2023.1,1366.9 2023.9,1359.9 2024.6,1367.4 2025.4,1360.9 2026.2,1367.5 2027.0,1365.7 2027.7,1365.3 2028.5,1371.0 2029.3,1364.6 2030.1,1364.9 2030.9,1369.2 2031.6,1369.8 2032.4,1363.4 2033.2,1366.9 2034.0,1369.0 2034.7,1367.7 2035.5,1368.2 2036.3,1354.7 2037.1,1689.1 2037.8,1740.6 2038.6,1745.5 2039.4,1742.8 2040.2,1747.5 2040.9,1750.8 2041.7,1747.3 2042.5,1745.2 2043.3,1745.3 2044.0,1740.9 2044.8,1740.3 2045.6,1751.6 2046.4,1755.7 2047.1,1748.1 2047.9,1747.6 2048.7,1744.7 2049.5,1751.1 2050.3,1745.0 2051.0,1747.5 2051.8,1745.4 2052.6,1747.9 2053.4,1739.8 2054.1,1747.0 2054.9,1750.3 2055.7,1743.4 2056.5,1738.6 2057.2,1745.3 2058.0,1748.0 2058.8,1748.3 2059.6,1750.9 2060.3,1753.0 2061.1,1753.6 2061.9,1742.5 2062.7,1744.9 2063.4,1741.6 2064.2,1741.6 2065.0,1743.9 2065.8,1745.2 2066.5,1733.7 2067.3,1742.8 2068.1,1741.0 2068.9,1737.6 2069.7,1734.0 2070.4,1697.4 2071.2,1372.9 2072.0,1376.5 2072.8,1376.4 2073.5,1378.2 2074.3,1380.5 2075.1,1373.5 2075.9,1386.3 2076.6,1378.7 2077.4,1385.4 2078.2,1377.4 2079.0,1381.6 2079.7,1379.9 2080.5,1379.5 2081.3,1379.4 2082.1,1379.4 2082.8,1375.0 2083.6,1375.9 2084.4,1377.4 2085.2,1375.6 2085.9,1375.5 2086.7,1377.5 2087.5,1375.4 2088.3,1377.9 2089.1,1375.6 2089.8,1373.3 2090.6,1373.7 2091.4,1374.3 2092.2,1371.1 2092.9,1375.6 2093.7,1377.7 2094.5,1381.0 2095.3,1383.0 2096.0,1388.1 2096.8,1377.7 2097.6,1378.9 2098.4,1381.7 2099.1,1387.2 2099.9,1377.2 2100.7,1378.5 2101.5,1383.9 2102.2,1382.2 2103.0,1385.1 2103.8,1380.0 2104.6,1382.9 2105.3,1379.6 2106.1,1376.7 2106.9,1383.7 2107.7,1383.5 2108.5,1385.9 2109.2,1376.8 2110.0,1383.6 2110.8,1381.4 2111.6,1381.1 2112.3,1377.9 2113.1,1381.7 2113.9,1381.9 2114.7,1379.7 2115.4,1378.0 2116.2,1389.5 2117.0,1381.7 2117.8,1384.6 2118.5,1383.1 2119.3,1379.5 2120.1,1455.9 2120.9,1729.2 2121.6,1740.9 2122.4,1735.8 2123.2,1746.6 2124.0,1749.0 2124.7,1741.5 2125.5,1741.5 2126.3,1749.7 2127.1,1753.6 2127.9,1756.4 2128.6,1743.8 2129.4,1752.2 2130.2,1752.1 2131.0,1752.7 2131.7,1744.7 2132.5,1745.6 2133.3,1744.8 2134.1,1741.7 2134.8,1754.2 2135.6,1749.2 2136.4,1763.0 2137.2,1751.9 2137.9,1753.6 2138.7,1751.9 2139.5,1746.7 2140.3,1750.5 2141.0,1758.7 2141.8,1754.6 2142.6,1743.3 2143.4,1750.5 2144.1,1743.7 2144.9,1747.4 2145.7,1740.2 2146.5,1742.0 2147.3,1752.3 2148.0,1750.5 2148.8,1743.4 2149.6,1747.2 2150.4,1738.1 2151.1,1704.4 2151.9,1608.0 2152.7,1594.5 2153.5,1594.4 2154.2,1585.4 2155.0,1596.0 2155.8,1588.1 2156.6,1588.9 2157.3,1583.2 2158.1,1596.6 2158.9,1576.9 2159.7,1577.8 2160.4,1584.3 2161.2,1577.8 2162.0,1578.0 2162.8,1586.9 2163.5,1570.7 2164.3,1579.2 2165.1,1577.8 2165.9,1585.5 2166.7,1579.8 2167.4,1573.5 2168.2,1591.7 2169.0,1585.5 2169.8,1587.4 2170.5,1593.7 2171.3,1588.0 2172.1,1587.0 2172.9,1593.6 2173.6,1585.8 2174.4,1582.5 2175.2,1583.1 2176.0,1585.8 2176.7,1583.5 2177.5,1589.1 2178.3,1592.7 2179.1,1583.8 2179.8,1583.4 2180.6,1575.9 2181.4,1587.1 2182.2,1593.1 2182.9,1584.6 2183.7,1594.1 2184.5,1586.1 2185.3,1583.4 2186.1,1585.6 2186.8,1597.7 2187.6,1588.6 2188.4,1588.5 2189.2,1580.3 2189.9,1591.9 2190.7,1594.5 2191.5,1578.7 2192.3,1594.7 2193.0,1584.7 2193.8,1582.6 2194.6,1590.5 2195.4,1572.4 2196.1,1577.4 2196.9,1582.0 2197.7,1582.6 2198.5,1588.2 2199.2,1607.6 2200.0,1635.2 2200.8,1669.5 2201.6,1708.2 2202.3,1734.3 2203.1,1748.3 2203.9,1754.2 2204.7,1750.3 2205.5,1745.4 2206.2,1752.0 2207.0,1745.7 2207.8,1749.9 2208.6,1744.2 2209.3,1748.0 2210.1,1748.2 2210.9,1752.1 2211.7,1746.0 2212.4,1755.5 2213.2,1754.2 2214.0,1754.2 2214.8,1751.4 2215.5,1744.2 2216.3,1758.0 2217.1,1752.4 2217.9,1749.3 2218.6,1761.5 2219.4,1750.4 2220.2,1744.9 2221.0,1754.8 2221.7,1743.7 2222.5,1747.1 2223.3,1755.1 2224.1,1748.8 2224.9,1755.1 2225.6,1749.6 2226.4,1757.0 2227.2,1752.0 2228.0,1749.2 2228.7,1753.9 2229.5,1752.8 2230.3,1753.4 2231.1,1752.1 2231.8,1740.3 2232.6,1719.8 2233.4,1686.0 2234.2,1647.2 2234.9,1616.9 2235.7,1599.2 2236.5,1577.5 2237.3,1582.5 2238.0,1578.4 2238.8,1588.3 2239.6,1581.5 2240.4,1588.4 2241.1,1589.3 2241.9,1584.3 2242.7,1576.4 2243.5,1590.8 2244.3,1571.4 2245.0,1593.2 2245.8,1578.8 2246.6,1580.0 2247.4,1578.3 2248.1,1585.7 2248.9,1592.7 2249.7,1584.4 2250.5,1582.2 2251.2,1580.6 2252.0,1579.0 2252.8,1584.3 2253.6,1569.9 2254.3,1586.0 2255.1,1582.1 2255.9,1572.1 2256.7,1574.5 2257.4,1580.7 2258.2,1588.3 2259.0,1578.7 2259.8,1586.8 2260.5,1580.0 2261.3,1582.5 2262.1,1581.9 2262.9,1589.9 2263.7,1572.7 2264.4,1592.0 2265.2,1594.7 2266.0,1582.2 2266.8,1587.9 2267.5,1600.0 2268.3,1585.0 2269.1,1589.4 2269.9,1582.0 2270.6,1579.9 2271.4,1582.3 2272.2,1567.5 2273.0,1572.7 2273.7,1575.5 2274.5,1583.2 2275.3,1580.2 2276.1,1581.2 2276.8,1590.2 2277.6,1576.6 2278.4,1583.7 2279.2,1589.2 2279.9,1581.0 2280.7,1579.0 2281.5,1600.9 2282.3,1622.9 2283.1,1653.2 2283.8,1691.6 2284.6,1725.1 2285.4,1741.6 2286.2,1749.3 2286.9,1752.0 2287.7,1747.5 2288.5,1752.9 2289.3,1753.1 2290.0,1754.2 2290.8,1750.1 2291.6,1756.5 2292.4,1758.1 2293.1,1753.3 2293.9,1752.3 2294.7,1755.2 2295.5,1742.2 2296.2,1763.0 2297.0,1752.7 2297.8,1754.4 2298.6,1761.4 2299.3,1757.3 2300.1,1759.3 2300.9,1742.7 2301.7,1748.2 2302.5,1745.0 2303.2,1757.6 2304.0,1734.9 2304.8,1755.9 2305.6,1758.9 2306.3,1753.4 2307.1,1754.3 2307.9,1752.9 2308.7,1745.0 2309.4,1755.6 2310.2,1745.4 2311.0,1746.1 2311.8,1746.9 2312.5,1757.8 2313.3,1755.0 2314.1,1759.5 2314.9,1758.3 2315.6,1750.6 2316.4,1750.1 2317.2,1756.6 2318.0,1748.0 2318.7,1742.4 2319.5,1731.0 2320.3,1715.1 2321.1,1691.7 2321.9,1670.0 2322.6,1662.9 2323.4,1666.1 2324.2,1642.8 2325.0,1658.4 2325.7,1661.1 2326.5,1666.0 2327.3,1650.8 2328.1,1663.5 2328.8,1650.6 2329.6,1673.5 2330.4,1649.1 2331.2,1654.0 2331.9,1650.3 2332.7,1651.2 2333.5,1654.4 2334.3,1645.8 2335.0,1649.8 2335.8,1653.4 2336.6,1651.6 2337.4,1659.3 2338.1,1659.4 2338.9,1668.6 2339.7,1666.3 2340.5,1649.7 2341.3,1668.9 2342.0,1665.1 2342.8,1643.7 2343.6,1651.2 2344.4,1651.6 2345.1,1668.9 2345.9,1656.4 2346.7,1655.2 2347.5,1640.5 2348.2,1650.5 2349.0,1658.7 2349.8,1657.4 2350.6,1657.4 2351.3,1665.7 2352.1,1657.4 2352.9,1655.5 2353.7,1655.3 2354.4,1662.6 2355.2,1657.0 2356.0,1652.0 2356.8,1648.7 2357.5,1658.2 2358.3,1663.8 2359.1,1650.5 2359.9,1657.0 2360.7,1653.7 2361.4,1650.8 2362.2,1645.4 2363.0,1662.0 2363.8,1662.3 2364.5,1648.0 2365.3,1658.9 2366.1,1668.1 2366.9,1668.0 2367.6,1678.2 2368.4,1709.4 2369.2,1732.0 2370.0,1738.8 2370.7,1753.3 2371.5,1757.3 2372.3,1747.9 2373.1,1755.4 2373.8,1748.4 2374.6,1753.7 2375.4,1749.1 2376.2,1755.2 2376.9,1749.8 2377.7,1753.4 2378.5,1747.9 2379.3,1747.7 2380.1,1751.6 2380.8,1752.5 2381.6,1749.1 2382.4,1754.0 2383.2,1752.7 2383.9,1755.7 2384.7,1756.0 2385.5,1746.6 2386.3,1748.0 2387.0,1755.1 2387.8,1757.5 2388.6,1753.4 2389.4,1753.9 2390.1,1760.6 2390.9,1750.3 2391.7,1746.3 2392.5,1751.2 2393.2,1754.4 2394.0,1758.9 2394.8,1745.5 2395.6,1742.1 2396.3,1753.0 2397.1,1746.0 2397.9,1754.4 2398.7,1755.0 2399.5,1752.0 2400.2,1740.4 2401.0,1723.8 2401.8,1709.2 2402.6,1693.8 2403.3,1684.1 2404.1,1682.3 2404.9,1688.2 2405.7,1683.7 2406.4,1681.9 2407.2,1672.8 2408.0,1677.3 2408.8,1685.9 2409.5,1677.1 2410.3,1682.8 2411.1,1682.5 2411.9,1678.6 2412.6,1683.7 2413.4,1680.8 2414.2,1672.3 2415.0,1665.3 2415.7,1680.3 2416.5,1677.2 2417.3,1688.2 2418.1,1686.6 2418.9,1695.5 2419.6,1675.3 2420.4,1685.2 2421.2,1683.2 2422.0,1680.6 2422.7,1679.0 2423.5,1677.4 2424.3,1680.2 2425.1,1676.7 2425.8,1672.3 2426.6,1668.4 2427.4,1684.0 2428.2,1679.1 2428.9,1681.8 2429.7,1680.4 2430.5,1684.2 2431.3,1683.7 2432.0,1670.9 2432.8,1676.6 2433.6,1678.8 2434.4,1684.1 2435.1,1678.1 2435.9,1677.1 2436.7,1680.9 2437.5,1663.8 2438.3,1675.1 2439.0,1678.1 2439.8,1683.0 2440.6,1678.3 2441.4,1676.6 2442.1,1676.6 2442.9,1687.0 2443.7,1661.3 2444.5,1681.4 2445.2,1676.6 2446.0,1676.8 2446.8,1680.2 2447.6,1676.2 2448.3,1686.5 2449.1,1691.9 2449.9,1702.6 2450.7,1720.6 2451.4,1733.4 2452.2,1747.0 2453.0,1747.6 2453.8,1750.2 2454.5,1757.6 2455.3,1747.4 2456.1,1754.7 2456.9,1743.5 2457.7,1749.9 2458.4,1756.0 2459.2,1745.9 2460.0,1754.7 2460.8,1753.0 2461.5,1748.9 2462.3,1751.3 2463.1,1747.6 2463.9,1751.3 2464.6,1750.4 2465.4,1755.5 2466.2,1752.6 2467.0,1757.3 2467.7,1755.2 2468.5,1751.9 2469.3,1753.1 2470.1,1756.6 2470.8,1746.8 2471.6,1750.1 2472.4,1750.8 2473.2,1751.8 2473.9,1758.1 2474.7,1757.5 2475.5,1753.1 2476.3,1755.7 2477.1,1757.2 2477.8,1755.6 2478.6,1763.2 2479.4,1761.9 2480.2,1755.2 2480.9,1750.1 2481.7,1747.2 2482.5,1735.5 2483.3,1730.2 2484.0,1722.4 2484.8,1715.1 2485.6,1701.3 2486.4,1705.2 2487.1,1698.2 2487.9,1700.3 2488.7,1701.8 2489.5,1712.2 2490.2,1704.7 2491.0,1697.0 2491.8,1710.7 2492.6,1703.3 2493.3,1704.8 2494.1,1706.3 2494.9,1704.9 2495.7,1713.4 2496.5,1693.8 2497.2,1695.4 2498.0,1699.8 2498.8,1700.3 2499.6,1700.1 2500.3,1697.0 2501.1,1701.5 2501.9,1699.1 2502.7,1708.5 2503.4,1688.3 2504.2,1698.2 2505.0,1699.7 2505.8,1693.8 2506.5,1698.0 2507.3,1707.1 2508.1,1696.0 2508.9,1707.7 2509.6,1707.9 2510.4,1699.6 2511.2,1701.5 2512.0,1704.5 2512.7,1708.5 2513.5,1703.5 2514.3,1708.9 2515.1,1705.8 2515.9,1705.7 2516.6,1701.6 2517.4,1704.4 2518.2,1709.0 2519.0,1699.8 2519.7,1691.1 2520.5,1701.5 2521.3,1696.0 2522.1,1703.5 2522.8,1699.1 2523.6,1707.0 2524.4,1703.9 2525.2,1709.5 2525.9,1699.6 2526.7,1709.3 2527.5,1714.7 2528.3,1694.8 2529.0,1718.1 2529.8,1707.8 2530.6,1698.2 2531.4,1706.8 2532.1,1706.2 2532.9,1719.6 2533.7,1727.7 2534.5,1740.6 2535.3,1750.8 2536.0,1753.3 2536.8,1749.6 2537.6,1760.4 2538.4,1752.6 2539.1,1752.7 2539.9,1758.9 2540.7,1751.5 2541.5,1759.3 2542.2,1757.4 2543.0,1748.3 2543.8,1749.4 2544.6,1746.2 2545.3,1749.5 2546.1,1745.0 2546.9,1751.9 2547.7,1749.4 2548.4,1747.1 2549.2,1754.9 2550.0,1753.4 2550.8,1756.5 2551.5,1751.0 2552.3,1747.7 2553.1,1750.5 2553.9,1750.3 2554.7,1747.0 2555.4,1741.9 2556.2,1745.2 2557.0,1748.7 2557.8,1750.7 2558.5,1756.5 2559.3,1750.2 2560.1,1752.7 2560.9,1753.5 2561.6,1745.7 2562.4,1748.1 2563.2,1743.1 2564.0,1746.6 2564.7,1745.5 2565.5,1737.4 2566.3,1726.7 2567.1,1716.8 2567.8,1713.8 2568.6,1709.1 2569.4,1712.1 2570.2,1714.9 2570.9,1711.3 2571.7,1718.4 2572.5,1723.2 2573.3,1714.8 2574.1,1722.1 2574.8,1718.3 2575.6,1717.9 2576.4,1721.1 2577.2,1713.8 2577.9,1713.2 2578.7,1705.0 2579.5,1725.5 2580.3,1723.9 2581.0,1730.9 2581.8,1722.6 2582.6,1722.4 2583.4,1716.2 2584.1,1718.9 2584.9,1716.6 2585.7,1715.8 2586.5,1716.5 2587.2,1719.8 2588.0,1715.1 2588.8,1718.3 2589.6,1720.8 2590.3,1723.4 2591.1,1715.4 2591.9,1721.1 2592.7,1720.7 2593.5,1714.4 2594.2,1707.3 2595.0,1718.8 2595.8,1716.9 2596.6,1713.2 2597.3,1710.2 2598.1,1717.8 2598.9,1712.5 2599.7,1721.0 2600.4,1714.3 2601.2,1715.2 2602.0,1719.8 2602.8,1723.5 2603.5,1718.3 2604.3,1730.2 2605.1,1711.0 2605.9,1722.5 2606.6,1728.0 2607.4,1713.0 2608.2,1719.5 2609.0,1722.7 2609.7,1713.7 2610.5,1714.8 2611.3,1719.0 2612.1,1703.1 2612.9,1720.5 2613.6,1730.7 2614.4,1734.1 2615.2,1741.4 2616.0,1748.1 2616.7,1749.5 2617.5,1752.3 2618.3,1751.4 2619.1,1746.6 2619.8,1749.4 2620.6,1755.1 2621.4,1752.7 2622.2,1750.2 2622.9,1751.8 2623.7,1749.7 2624.5,1747.7 2625.3,1755.5 2626.0,1757.6 2626.8,1755.6 2627.6,1755.6 2628.4,1748.0 2629.1,1754.4 2629.9,1759.8 2630.7,1743.1 2631.5,1756.0 2632.3,1755.8 2633.0,1752.1 2633.8,1743.8 2634.6,1751.6 2635.4,1758.0 2636.1,1756.6 2636.9,1750.0 2637.7,1752.2 2638.5,1745.1 2639.2,1759.1 2640.0,1759.4 2640.8,1749.4 2641.6,1751.0 2642.3,1758.8 2643.1,1760.7 2643.9,1756.6 2644.7,1755.7 2645.4,1745.9 2646.2,1744.6 2647.0,1741.9 2647.8,1739.2 2648.5,1748.3 2649.3,1735.0 2650.1,1737.0 2650.9,1729.2 2651.7,1739.5 2652.4,1741.6 2653.2,1732.3 2654.0,1727.1 2654.8,1730.5 2655.5,1736.2 2656.3,1734.4 2657.1,1737.6 2657.9,1731.4 2658.6,1738.4 2659.4,1733.6 2660.2,1730.7 2661.0,1728.7 2661.7,1733.6 2662.5,1722.6 2663.3,1739.1 2664.1,1733.7 2664.8,1737.3 2665.6,1731.8 2666.4,1732.3 2667.2,1735.5 2667.9,1738.3 2668.7,1731.4 2669.5,1739.9 2670.3,1733.6 2671.1,1732.2 2671.8,1737.4 2672.6,1731.5 2673.4,1734.5 2674.2,1719.9 2674.9,1738.5 2675.7,1737.7 2676.5,1728.3 2677.3,1741.2 2678.0,1737.8 2678.8,1731.3 2679.6,1722.6 2680.4,1739.6 2681.1,1735.6 2681.9,1737.7 2682.7,1726.5 2683.5,1734.5 2684.2,1727.6 2685.0,1733.1 2685.8,1740.6 2686.6,1736.5 2687.3,1735.1 2688.1,1735.8 2688.9,1729.0 2689.7,1728.8 2690.5,1734.3 2691.2,1728.5 2692.0,1733.7 2692.8,1733.3 2693.6,1741.3 2694.3,1733.9 2695.1,1737.1 2695.9,1734.5 2696.7,1731.8 2697.4,1744.6 2698.2,1731.2 2699.0,1737.7 2699.8,1738.8 2700.5,1747.7 2701.3,1754.1 2702.1,1750.9 2702.9,1762.8 2703.6,1745.3 2704.4,1754.0 2705.2,1750.6 2706.0,1749.9 2706.7,1747.3 2707.5,1753.3 2708.3,1746.9 2709.1,1748.6 2709.9,1754.0 2710.6,1751.6 2711.4,1754.0 2712.2,1756.4 2713.0,1754.6 2713.7,1751.8 2714.5,1753.9 2715.3,1752.0 2716.1,1753.4 2716.8,1744.8 2717.6,1750.1 2718.4,1742.6 2719.2,1751.8 2719.9,1750.4 2720.7,1754.0 2721.5,1748.8 2722.3,1751.3 2723.0,1752.7 2723.8,1752.5 2724.6,1751.9 2725.4,1756.8 2726.1,1749.0 2726.9,1750.5 2727.7,1753.5 2728.5,1755.3 2729.3,1744.6 2730.0,1759.5 2730.8,1752.7 2731.6,1743.9 2732.4,1748.9 2733.1,1733.8 2733.9,1743.3 2734.7,1748.5 2735.5,1739.9 2736.2,1738.8 2737.0,1740.6 2737.8,1742.8 2738.6,1734.3 2739.3,1737.4 2740.1,1736.8 2740.9,1739.9 2741.7,1742.9 2742.4,1744.8 2743.2,1744.4 2744.0,1745.5 2744.8,1734.0 2745.5,1744.0 2746.3,1736.9 2747.1,1730.5 2747.9,1734.0 2748.7,1741.8 2749.4,1736.1 2750.2,1735.9 2751.0,1744.3 2751.8,1748.9 2752.5,1731.2 2753.3,1743.2 2754.1,1735.9 2754.9,1738.1 2755.6,1728.2 2756.4,1738.5 2757.2,1737.1 2758.0,1742.9 2758.7,1743.8 2759.5,1739.0 2760.3,1735.3 2761.1,1736.1 2761.8,1734.0 2762.6,1738.2 2763.4,1738.4 2764.2,1733.2 2764.9,1740.0 2765.7,1741.1 2766.5,1754.3 2767.3,1735.8 2768.1,1737.3 2768.8,1733.7 2769.6,1735.7 2770.4,1730.4 2771.2,1739.4 2771.9,1737.5 2772.7,1735.7 2773.5,1742.3 2774.3,1729.3 2775.0,1741.2 2775.8,1737.5 2776.6,1741.6 2777.4,1736.6 2778.1,1743.3 2778.9,1740.4 2779.7,1730.6 2780.5,1746.3 2781.2,1747.9 2782.0,1744.8 2782.8,1750.3 2783.6,1745.5 2784.3,1749.6 2785.1,1764.0 2785.9,1749.6 2786.7,1758.7 2787.5,1763.7 2788.2,1752.1 2789.0,1762.9 2789.8,1753.9 2790.6,1753.5 2791.3,1754.5 2792.1,1750.9 2792.9,1758.0 2793.7,1754.2 2794.4,1742.3 2795.2,1753.3 2796.0,1747.0 2796.8,1760.3 2797.5,1756.4 2798.3,1756.4 2799.1,1757.7 2799.9,1753.4 2800.6,1753.0 2801.4,1750.9 2802.2,1747.1 2803.0,1756.2 2803.7,1764.1 2804.5,1751.4 2805.3,1749.8 2806.1,1751.7 2806.9,1760.9 2807.6,1745.6 2808.4,1750.6 2809.2,1757.9 2810.0,1758.6 2810.7,1752.0 2811.5,1754.3 2812.3,1748.1 2813.1,1752.6 2813.8,1751.5 2814.6,1748.1 2815.4,1742.2 2816.2,1754.3 2816.9,1744.2 2817.7,1747.8 2818.5,1738.0 2819.3,1744.1 2820.0,1733.3 2820.8,1739.2 2821.6,1741.2 2822.4,1733.1 2823.1,1734.2 2823.9,1737.4 2824.7,1736.9 2825.5,1740.1 2826.3,1729.6 2827.0,1740.0 2827.8,1736.2 2828.6,1740.9 2829.4,1737.4 2830.1,1729.0 2830.9,1732.7 2831.7,1744.5 2832.5,1733.3 2833.2,1752.4 2834.0,1752.2 2834.8,1747.6 2835.6,1738.3 2836.3,1744.5 2837.1,1741.2 2837.9,1734.5 2838.7,1742.1 2839.4,1744.0 2840.2,1730.8 2841.0,1743.1 2841.8,1746.3 2842.5,1736.7 2843.3,1733.4 2844.1,1734.6 2844.9,1739.7 2845.7,1725.8 2846.4,1736.6 2847.2,1732.6 2848.0,1736.2 2848.8,1740.2 2849.5,1738.0 2850.3,1733.6 2851.1,1741.1 2851.9,1741.6 2852.6,1738.0 2853.4,1740.8 2854.2,1745.3 2855.0,1744.7 2855.7,1741.8 2856.5,1740.6 2857.3,1748.4 2858.1,1737.5 2858.8,1738.3 2859.6,1738.4 2860.4,1742.3 2861.2,1747.0 2861.9,1743.0 2862.7,1741.5 2863.5,1738.2 2864.3,1744.3 2865.1,1749.4 2865.8,1746.2 2866.6,1746.8 2867.4,1752.6 2868.2,1747.1 2868.9,1753.6 2869.7,1748.0 2870.5,1755.8 2871.3,1749.6 2872.0,1758.1 2872.8,1754.3 2873.6,1758.1 2874.4,1749.7 2875.1,1748.7 2875.9,1754.4 2876.7,1757.2 2877.5,1751.6 2878.2,1758.8 2879.0,1760.3 2879.8,1760.3 2880.6,1751.9 2881.3,1744.0 2882.1,1754.9 2882.9,1754.1 2883.7,1754.3 2884.5,1755.6 2885.2,1748.9 2886.0,1753.2 2886.8,1754.2 2887.6,1755.0 2888.3,1756.3 2889.1,1743.5 2889.9,1749.3 2890.7,1753.1 2891.4,1756.7 2892.2,1748.1 2893.0,1745.7 2893.8,1738.5 2894.5,1741.0 2895.3,1746.2 2896.1,1746.1 2896.9,1740.7 2897.6,1732.4 2898.4,1743.0 2899.2,1738.6 2900.0,1737.5 2900.7,1743.8 2901.5,1749.2 2902.3,1748.3 2903.1,1739.8 2903.9,1741.5 2904.6,1742.9 2905.4,1748.0 2906.2,1739.4 2907.0,1739.0 2907.7,1737.6 2908.5,1727.9 2909.3,1736.8 2910.1,1746.7 2910.8,1747.1 2911.6,1747.2 2912.4,1738.9 2913.2,1738.9 2913.9,1738.8 2914.7,1733.2 2915.5,1736.0 2916.3,1734.1 2917.0,1742.2 2917.8,1737.5 2918.6,1743.3 2919.4,1738.9 2920.1,1739.7 2920.9,1736.4 2921.7,1740.9 2922.5,1747.4 2923.3,1738.4 2924.0,1743.3 2924.8,1741.1 2925.6,1746.8 2926.4,1741.9 2927.1,1730.1 2927.9,1747.3 2928.7,1742.8 2929.5,1747.2 2930.2,1737.4 2931.0,1748.2 2931.8,1746.1 2932.6,1739.6 2933.3,1742.1 2934.1,1742.5 2934.9,1740.9 2935.7,1739.1 2936.4,1740.9 2937.2,1740.0 2938.0,1746.4 2938.8,1753.1 2939.5,1741.6 2940.3,1740.8 2941.1,1749.4 2941.9,1750.2 2942.7,1747.5 2943.4,1736.1 2944.2,1731.3 2945.0,1737.4 2945.8,1734.8 2946.5,1737.1 2947.3,1747.1 2948.1,1745.1 2948.9,1746.1 2949.6,1755.5 2950.4,1759.0 2951.2,1751.2 2952.0,1751.2 2952.7,1757.3 2953.5,1749.0 2954.3,1751.2 2955.1,1753.0 2955.8,1755.2 2956.6,1755.4 2957.4,1755.7 2958.2,1765.9 2958.9,1757.0 2959.7,1756.1 2960.5,1763.8 2961.3,1747.4 2962.1,1757.7 2962.8,1755.2 2963.6,1752.5 2964.4,1761.0 2965.2,1754.0 2965.9,1745.4 2966.7,1751.9 2967.5,1759.2 2968.3,1753.9 2969.0,1750.1 2969.8,1739.5 2970.6,1754.2 2971.4,1752.2 2972.1,1745.0 2972.9,1753.9 2973.7,1761.1 2974.5,1757.3 2975.2,1756.8 2976.0,1764.1 2976.8,1745.0 2977.6,1764.1 2978.3,1755.1 2979.1,1755.0 2979.9,1738.2 2980.7,1747.7 2981.5,1747.6 2982.2,1749.6 2983.0,1729.4 2983.8,1749.7 2984.6,1744.3 2985.3,1734.5 2986.1,1747.3 2986.9,1743.2 2987.7,1748.4 2988.4,1747.8 2989.2,1744.2 2990.0,1741.6 2990.8,1737.5 2991.5,1744.5 2992.3,1738.5 2993.1,1752.9 2993.9,1745.8 2994.6,1747.5 2995.4,1747.1 2996.2,1733.8 2997.0,1748.3 2997.7,1742.4 2998.5,1749.5 2999.3,1746.8 3000.1,1738.8 3000.9,1741.3 3001.6,1739.2 3002.4,1743.5 3003.2,1754.4 3004.0,1733.5 3004.7,1746.3 3005.5,1741.5 3006.3,1748.5 3007.1,1740.1 3007.8,1751.7 3008.6,1745.4 3009.4,1734.5 3010.2,1750.8 3010.9,1742.3 3011.7,1747.7 3012.5,1743.5 3013.3,1745.2 3014.0,1746.7 3014.8,1744.0 3015.6,1747.9 3016.4,1746.3 3017.1,1747.3 3017.9,1735.1 3018.7,1747.5 3019.5,1738.0 3020.3,1751.5 3021.0,1735.6 3021.8,1747.6 3022.6,1742.4 3023.4,1738.5 3024.1,1745.2 3024.9,1744.6 3025.7,1743.9 3026.5,1744.8 3027.2,1744.4 3028.0,1740.5 3028.8,1743.7 3029.6,1752.3 3030.3,1743.1 3031.1,1750.6 3031.9,1749.4 3032.7,1749.0 3033.4,1752.1 3034.2,1754.2 3035.0,1751.0 3035.8,1751.9 3036.5,1750.4 3037.3,1752.2 3038.1,1746.7 3038.9,1763.5 3039.7,1756.7 3040.4,1762.2 3041.2,1753.5 3042.0,1757.1 3042.8,1758.0 3043.5,1760.5 3044.3,1763.4 3045.1,1760.1 3045.9,1759.2 3046.6,1758.2 3047.4,1750.1 3048.2,1750.8 3049.0,1757.2 3049.7,1755.6 3050.5,1746.9 3051.3,1757.4 3052.1,1756.5 3052.8,1754.0 3053.6,1758.0 3054.4,1746.4 3055.2,1750.6 3055.9,1746.3 3056.7,1755.7 3057.5,1752.7 3058.3,1758.5 3059.1,1752.3 3059.8,1746.2 3060.6,1752.5 3061.4,1750.3 3062.2,1746.9 3062.9,1747.6 3063.7,1742.2 3064.5,1738.6 3065.3,1747.0 3066.0,1750.9 3066.8,1746.2 3067.6,1743.7 3068.4,1751.2 3069.1,1738.2 3069.9,1745.7 3070.7,1749.5 3071.5,1743.3 3072.2,1742.9 3073.0,1743.3 3073.8,1746.8 3074.6,1737.5 3075.3,1735.7 3076.1,1746.4 3076.9,1745.0 3077.7,1747.2 3078.5,1748.4 3079.2,1736.9 3080.0,1741.9 3080.8,1731.7 3081.6,1734.9 3082.3,1743.5 3083.1,1743.2 3083.9,1740.9 3084.7,1731.3 3085.4,1745.0 3086.2,1739.8 3087.0,1733.9 3087.8,1732.1 3088.5,1753.5 3089.3,1746.0 3090.1,1737.6 3090.9,1745.5 3091.6,1739.7 3092.4,1748.5 3093.2,1738.9 3094.0,1740.0 3094.7,1745.7 3095.5,1746.0 3096.3,1739.2 3097.1,1737.2 3097.9,1729.3 3098.6,1736.0 3099.4,1735.3 3100.2,1736.3 3101.0,1735.0 3101.7,1749.5 3102.5,1743.0 3103.3,1738.7 3104.1,1741.8 3104.8,1753.3 3105.6,1758.2 3106.4,1748.4 3107.2,1752.8 3107.9,1742.3 3108.7,1745.5 3109.5,1743.6 3110.3,1743.4 3111.0,1745.5 3111.8,1742.6 3112.6,1744.2 3113.4,1751.1 3114.1,1745.9 3114.9,1735.5 3115.7,1744.4 3116.5,1735.8 3117.3,1744.3 3118.0,1751.7 3118.8,1754.9 3119.6,1756.7 3120.4,1750.2 3121.1,1752.0 3121.9,1752.4 3122.7,1758.3 3123.5,1748.7 3124.2,1757.7 3125.0,1757.8 3125.8,1761.0 3126.6,1756.4 3127.3,1748.5 3128.1,1750.2 3128.9,1744.3 3129.7,1765.5 3130.4,1749.7 3131.2,1762.2 3132.0,1750.7 3132.8,1759.9 3133.5,1759.9 3134.3,1758.3 3135.1,1750.8 3135.9,1757.8 3136.7,1758.5 3137.4,1750.7 3138.2,1759.0 3139.0,1748.4 3139.8,1749.1 3140.5,1753.4 3141.3,1754.0 3142.1,1757.0 3142.9,1752.9 3143.6,1752.3 3144.4,1750.6 3145.2,1752.6 3146.0,1750.1 3146.7,1747.6 3147.5,1756.5 3148.3,1754.3 3149.1,1749.3 3149.8,1757.2 3150.6,1758.1 3151.4,1752.2 3152.2,1741.9 3152.9,1749.3 3153.7,1752.7 3154.5,1744.6 3155.3,1748.6 3156.1,1757.4 3156.8,1756.0 3157.6,1755.1 3158.4,1749.7 3159.2,1753.6 3159.9,1755.3 3160.7,1753.4 3161.5,1760.3 3162.3,1755.3 3163.0,1749.8 3163.8,1756.2 3164.6,1745.3 3165.4,1749.4 3166.1,1754.0 3166.9,1756.4 3167.7,1754.9 3168.5,1749.5 3169.2,1757.8 3170.0,1756.5 3170.8,1749.3 3171.6,1756.8 3172.3,1745.9 3173.1,1747.7 3173.9,1756.0 3174.7,1746.6 3175.5,1749.5 3176.2,1751.0 3177.0,1755.1 3177.8,1753.9 3178.6,1753.1 3179.3,1759.0 3180.1,1744.5 3180.9,1760.3 3181.7,1754.3 3182.4,1745.9 3183.2,1753.1 3184.0,1747.3 3184.8,1757.2 3185.5,1753.8 3186.3,1749.3 3187.1,1750.0 3187.9,1755.0 3188.6,1748.7 3189.4,1755.8 3190.2,1754.8 3191.0,1759.7 3191.7,1752.9 3192.5,1750.5 3193.3,1751.7 3194.1,1758.4 3194.9,1748.5 3195.6,1745.8 3196.4,1749.7 3197.2,1747.2 3198.0,1753.7 3198.7,1748.4 3199.5,1747.2 3200.3,1751.9 3201.1,1750.6 3201.8,1757.1 3202.6,1766.1 3203.4,1758.0 3204.2,1758.8 3204.9,1758.0 3205.7,1758.8 3206.5,1763.7 3207.3,1759.7 3208.0,1751.8 3208.8,1763.5 3209.6,1751.1 3210.4,1761.6 3211.1,1752.1 3211.9,1753.9 3212.7,1744.0 3213.5,1757.4 3214.3,1757.5 3215.0,1757.5 3215.8,1754.9 3216.6,1754.0 3217.4,1762.2 3218.1,1753.2 3218.9,1758.0 3219.7,1753.7 3220.5,1757.5 3221.2,1762.9 3222.0,1758.1 3222.8,1761.2 3223.6,1750.4 3224.3,1759.1 3225.1,1756.6 3225.9,1750.6 3226.7,1754.9 3227.4,1758.0 3228.2,1752.7 3229.0,1756.7 3229.8,1758.4 3230.5,1764.6 3231.3,1759.6 3232.1,1752.6 3232.9,1752.4 3233.7,1753.7 3234.4,1754.7 3235.2,1760.7 3236.0,1753.3 3236.8,1755.9 3237.5,1749.2 3238.3,1760.4 3239.1,1749.6 3239.9,1751.7 3240.6,1746.7 3241.4,1752.3 3242.2,1754.4 3243.0,1753.1 3243.7,1752.9 3244.5,1752.9 3245.3,1752.4 3246.1,1753.9 3246.8,1750.5 3247.6,1753.4 3248.4,1750.2 3249.2,1757.3 3249.9,1756.9 3250.7,1749.4 3251.5,1748.1 3252.3,1757.4 3253.1,1756.7 3253.8,1747.2 3254.6,1751.7 3255.4,1755.6 3256.2,1754.8 3256.9,1748.1 3257.7,1745.9 3258.5,1758.0 3259.3,1749.8 3260.0,1747.2 3260.8,1743.2 3261.6,1753.0 3262.4,1752.7 3263.1,1751.2 3263.9,1757.0 3264.7,1756.5 3265.5,1751.4 3266.2,1750.3 3267.0,1754.2 3267.8,1746.4 3268.6,1751.6 3269.3,1753.3 3270.1,1753.2 3270.9,1748.9 3271.7,1750.2 3272.5,1752.5 3273.2,1755.2 3274.0,1748.2 3274.8,1751.6 3275.6,1752.2 3276.3,1754.9 3277.1,1756.6 3277.9,1749.7 3278.7,1753.6 3279.4,1748.6 3280.2,1751.6 3281.0,1756.1 3281.8,1755.0 3282.5,1752.0 3283.3,1753.6 3284.1,1753.6 3284.9,1751.5 3285.6,1753.2 3286.4,1755.3 3287.2,1758.3 3288.0,1757.2 3288.7,1754.7 3289.5,1752.0 3290.3,1754.6 3291.1,1760.4 3291.9,1753.7 3292.6,1766.2 3293.4,1760.5 3294.2,1753.7 3295.0,1762.6 3295.7,1759.1 3296.5,1763.1 3297.3,1752.0 3298.1,1758.3 3298.8,1748.6 3299.6,1757.2 3300.4,1755.0 3301.2,1761.6 3301.9,1766.2 3302.7,1755.1 3303.5,1756.0 3304.3,1748.5 3305.0,1759.4 3305.8,1760.4 3306.6,1756.4 3307.4,1755.3 3308.1,1749.8 3308.9,1760.2 3309.7,1760.3 3310.5,1764.5 3311.3,1755.1 3312.0,1755.3 3312.8,1753.8 3313.6,1745.7 3314.4,1750.9 3315.1,1756.5 3315.9,1746.6 3316.7,1758.9 3317.5,1750.8 3318.2,1750.9 3319.0,1756.1 3319.8,1746.2 3320.6,1756.3 3321.3,1748.2 3322.1,1754.7 3322.9,1753.4 3323.7,1758.8 3324.4,1758.5 3325.2,1750.5 3326.0,1756.5 3326.8,1760.5 3327.5,1759.3 3328.3,1751.8 3329.1,1748.5 3329.9,1750.7 3330.7,1744.1 3331.4,1758.9 3332.2,1759.5 3333.0,1753.6 3333.8,1743.4 3334.5,1744.0 3335.3,1758.8 3336.1,1756.9 3336.9,1756.8 3337.6,1749.6 3338.4,1752.9 3339.2,1758.2 3340.0,1746.3 3340.7,1755.9 3341.5,1748.4 3342.3,1756.3 3343.1,1754.6 3343.8,1754.4 3344.6,1756.4 3345.4,1751.4 3346.2,1756.1 3346.9,1764.8 3347.7,1752.2 3348.5,1753.4 3349.3,1755.3 3350.1,1755.6 3350.8,1755.7 3351.6,1758.0 3352.4,1757.3 3353.2,1767.2 3353.9,1754.6 3354.7,1757.8 3355.5,1759.3 3356.3,1758.3 3357.0,1755.4 3357.8,1760.3 3358.6,1753.7 3359.4,1751.1 3360.1,1751.0 3360.9,1754.4 3361.7,1749.9 3362.5,1751.9 3363.2,1746.7 3364.0,1761.4 3364.8,1768.8 3365.6,1754.1 3366.3,1762.4 3367.1,1760.2 3367.9,1759.3 3368.7,1757.4 3369.5,1757.1 3370.2,1759.4 3371.0,1765.9 3371.8,1753.1 3372.6,1752.7 3373.3,1754.0 3374.1,1746.4 3374.9,1758.7 3375.7,1765.1 3376.4,1755.4 3377.2,1759.7 3378.0,1759.9 3378.8,1754.2 3379.5,1746.2 3380.3,1757.8 3381.1,1754.5 3381.9,1744.2 3382.6,1754.6 3383.4,1755.4 3384.2,1753.4 3385.0,1751.7 3385.7,1752.1 3386.5,1760.1 3387.3,1759.0 3388.1,1755.8 3388.9,1760.2 3389.6,1761.1 3390.4,1760.2 3391.2,1752.7 3392.0,1755.7 3392.7,1766.5 3393.5,1752.5 3394.3,1758.7 3395.1,1756.5 3395.8,1747.9 3396.6,1755.6 3397.4,1753.8 3398.2,1756.8 3398.9,1748.6 3399.7,1748.6 3400.5,1753.8 3401.3,1754.1 3402.0,1754.4 3402.8,1763.1 3403.6,1756.6 3404.4,1753.1 3405.1,1756.6 3405.9,1757.5 3406.7,1760.3 3407.5,1750.2 3408.3,1752.0 3409.0,1748.3 3409.8,1749.8 3410.6,1745.9 3411.4,1749.0 3412.1,1754.7 3412.9,1756.3 3413.7,1752.2 3414.5,1749.3 3415.2,1759.3 3416.0,1749.4 3416.8,1747.8 3417.6,1760.3 3418.3,1751.6 3419.1,1749.9 3419.9,1752.6 3420.7,1751.7 3421.4,1749.1 3422.2,1763.3 3423.0,1747.3 3423.8,1757.2 3424.5,1755.0 3425.3,1739.0 3426.1,1752.3 3426.9,1747.9 3427.7,1751.3 3428.4,1754.6 3429.2,1746.5 3430.0,1756.0 3430.8,1752.1 3431.5,1761.4 3432.3,1764.4 3433.1,1752.8 3433.9,1744.6 3434.6,1753.9 3435.4,1753.7 3436.2,1755.1 3437.0,1756.8 3437.7,1749.9 3438.5,1755.5 3439.3,1755.7 3440.1,1754.5 3440.8,1759.6 3441.6,1757.0 3442.4,1752.6 3443.2,1751.3 3443.9,1759.3 3444.7,1752.1 3445.5,1760.3 3446.3,1751.6 3447.1,1755.3 3447.8,1744.1 3448.6,1752.4 3449.4,1753.9 3450.2,1751.3 3450.9,1757.0 3451.7,1756.8 3452.5,1749.0 3453.3,1756.4 3454.0,1752.6 3454.8,1759.3 3455.6,1763.1 3456.4,1757.5 3457.1,1752.8 3457.9,1751.9 3458.7,1757.7" stroke="#ffffff" stroke-width="3.6" fill="none" stroke-linejoin="round"/>
<path d="M477.3 1379.0H3458.7" stroke="#ff260e" stroke-width="6.8" stroke-dasharray="42.6 10.6 6.9 10.2" fill="none"/>
<path d="M477.3 1589.8H3458.7" stroke="#14e022" stroke-width="6.8" stroke-dasharray="24.6 10.54" fill="none"/>
<path d="M477.3 1756.2H3459.7" stroke="#0814f0" stroke-width="6.8" fill="none"/>
<rect x="474.2" y="418.6" width="7.7" height="1524.1" fill="#fff"/>
<rect x="474.2" y="1935.80" width="2988.2" height="6.9" fill="#fff"/>
<rect x="478" y="1935.90" width="17.2" height="6.7" fill="#fff"/>
<rect x="478" y="1632.45" width="17.2" height="6.7" fill="#fff"/>
<rect x="478" y="1329.00" width="17.2" height="6.7" fill="#fff"/>
<rect x="478" y="1025.55" width="17.2" height="6.7" fill="#fff"/>
<rect x="478" y="722.10" width="17.2" height="6.7" fill="#fff"/>
<rect x="478" y="418.65" width="17.2" height="6.7" fill="#fff"/>
<rect x="515.10" y="1923.5" width="7.4" height="16" fill="#fff"/>
<rect x="597.92" y="1923.5" width="7.4" height="16" fill="#fff"/>
<rect x="680.74" y="1923.5" width="7.4" height="16" fill="#fff"/>
<rect x="763.56" y="1923.5" width="7.4" height="16" fill="#fff"/>
<rect x="846.38" y="1923.5" width="7.4" height="16" fill="#fff"/>
<rect x="929.20" y="1923.5" width="7.4" height="16" fill="#fff"/>
<rect x="1012.02" y="1923.5" width="7.4" height="16" fill="#fff"/>
<rect x="1094.84" y="1923.5" width="7.4" height="16" fill="#fff"/>
<rect x="1177.66" y="1923.5" width="7.4" height="16" fill="#fff"/>
<rect x="1260.48" y="1923.5" width="7.4" height="16" fill="#fff"/>
<rect x="1343.30" y="1923.5" width="7.4" height="16" fill="#fff"/>
<rect x="1426.12" y="1923.5" width="7.4" height="16" fill="#fff"/>
<rect x="1508.94" y="1923.5" width="7.4" height="16" fill="#fff"/>
<rect x="1591.76" y="1923.5" width="7.4" height="16" fill="#fff"/>
<rect x="1674.58" y="1923.5" width="7.4" height="16" fill="#fff"/>
<rect x="1757.40" y="1923.5" width="7.4" height="16" fill="#fff"/>
<rect x="1840.22" y="1923.5" width="7.4" height="16" fill="#fff"/>
<rect x="1923.04" y="1923.5" width="7.4" height="16" fill="#fff"/>
<rect x="2005.86" y="1923.5" width="7.4" height="16" fill="#fff"/>
<rect x="2088.68" y="1923.5" width="7.4" height="16" fill="#fff"/>
<rect x="2171.50" y="1923.5" width="7.4" height="16" fill="#fff"/>
<rect x="2254.32" y="1923.5" width="7.4" height="16" fill="#fff"/>
<rect x="2337.14" y="1923.5" width="7.4" height="16" fill="#fff"/>
<rect x="2419.96" y="1923.5" width="7.4" height="16" fill="#fff"/>
<rect x="2502.78" y="1923.5" width="7.4" height="16" fill="#fff"/>
<rect x="2585.60" y="1923.5" width="7.4" height="16" fill="#fff"/>
<rect x="2668.42" y="1923.5" width="7.4" height="16" fill="#fff"/>
<rect x="2751.24" y="1923.5" width="7.4" height="16" fill="#fff"/>
<rect x="2834.06" y="1923.5" width="7.4" height="16" fill="#fff"/>
<rect x="2916.88" y="1923.5" width="7.4" height="16" fill="#fff"/>
<rect x="2999.70" y="1923.5" width="7.4" height="16" fill="#fff"/>
<rect x="3082.52" y="1923.5" width="7.4" height="16" fill="#fff"/>
<rect x="3165.34" y="1923.5" width="7.4" height="16" fill="#fff"/>
<rect x="3248.16" y="1923.5" width="7.4" height="16" fill="#fff"/>
<rect x="3330.98" y="1923.5" width="7.4" height="16" fill="#fff"/>
<rect x="3413.80" y="1923.5" width="7.4" height="16" fill="#fff"/>
<g font-family="'DejaVu Sans','Liberation Sans',sans-serif" font-size="38.6" fill="#fff">
<text transform="translate(461.2 1954.5) scale(1.070 1)" text-anchor="end">0</text>
<text transform="translate(461.2 1651.0) scale(1.070 1)" text-anchor="end">20</text>
<text transform="translate(461.2 1347.5) scale(1.070 1)" text-anchor="end">40</text>
<text transform="translate(461.2 1044.1) scale(1.070 1)" text-anchor="end">60</text>
<text transform="translate(461.2 740.7) scale(1.070 1)" text-anchor="end">80</text>
<text transform="translate(461.2 437.2) scale(1.070 1)" text-anchor="end">100</text>
<text transform="translate(519.3 1983.6) scale(1.065 1)" text-anchor="middle">1</text>
<text transform="translate(602.1 1983.6) scale(1.065 1)" text-anchor="middle">2</text>
<text transform="translate(684.9 1983.6) scale(1.065 1)" text-anchor="middle">3</text>
<text transform="translate(767.8 1983.6) scale(1.065 1)" text-anchor="middle">4</text>
<text transform="translate(850.6 1983.6) scale(1.065 1)" text-anchor="middle">5</text>
<text transform="translate(933.4 1983.6) scale(1.065 1)" text-anchor="middle">6</text>
<text transform="translate(1016.2 1983.6) scale(1.065 1)" text-anchor="middle">7</text>
<text transform="translate(1099.0 1983.6) scale(1.065 1)" text-anchor="middle">8</text>
<text transform="translate(1181.9 1983.6) scale(1.065 1)" text-anchor="middle">9</text>
<text transform="translate(1264.7 1983.6) scale(1.065 1)" text-anchor="middle">10</text>
<text transform="translate(1347.5 1983.6) scale(1.065 1)" text-anchor="middle">11</text>
<text transform="translate(1430.3 1983.6) scale(1.065 1)" text-anchor="middle">12</text>
<text transform="translate(1513.1 1983.6) scale(1.065 1)" text-anchor="middle">13</text>
<text transform="translate(1596.0 1983.6) scale(1.065 1)" text-anchor="middle">14</text>
<text transform="translate(1678.8 1983.6) scale(1.065 1)" text-anchor="middle">15</text>
<text transform="translate(1761.6 1983.6) scale(1.065 1)" text-anchor="middle">16</text>
<text transform="translate(1844.4 1983.6) scale(1.065 1)" text-anchor="middle">17</text>
<text transform="translate(1927.2 1983.6) scale(1.065 1)" text-anchor="middle">18</text>
<text transform="translate(2010.1 1983.6) scale(1.065 1)" text-anchor="middle">19</text>
<text transform="translate(2092.9 1983.6) scale(1.065 1)" text-anchor="middle">20</text>
<text transform="translate(2175.7 1983.6) scale(1.065 1)" text-anchor="middle">21</text>
<text transform="translate(2258.5 1983.6) scale(1.065 1)" text-anchor="middle">22</text>
<text transform="translate(2341.3 1983.6) scale(1.065 1)" text-anchor="middle">23</text>
<text transform="translate(2424.2 1983.6) scale(1.065 1)" text-anchor="middle">24</text>
<text transform="translate(2507.0 1983.6) scale(1.065 1)" text-anchor="middle">25</text>
<text transform="translate(2589.8 1983.6) scale(1.065 1)" text-anchor="middle">26</text>
<text transform="translate(2672.6 1983.6) scale(1.065 1)" text-anchor="middle">27</text>
<text transform="translate(2755.4 1983.6) scale(1.065 1)" text-anchor="middle">28</text>
<text transform="translate(2838.3 1983.6) scale(1.065 1)" text-anchor="middle">29</text>
<text transform="translate(2921.1 1983.6) scale(1.065 1)" text-anchor="middle">30</text>
<text transform="translate(3003.9 1983.6) scale(1.065 1)" text-anchor="middle">31</text>
<text transform="translate(3086.7 1983.6) scale(1.065 1)" text-anchor="middle">32</text>
<text transform="translate(3169.5 1983.6) scale(1.065 1)" text-anchor="middle">33</text>
<text transform="translate(3252.4 1983.6) scale(1.065 1)" text-anchor="middle">34</text>
<text transform="translate(3335.2 1983.6) scale(1.065 1)" text-anchor="middle">35</text>
<text transform="translate(3418.0 1983.6) scale(1.065 1)" text-anchor="middle">36</text>
</g>
<text transform="translate(1968.3 413) scale(1.273 1)" text-anchor="middle" font-family="'DejaVu Sans','Liberation Sans',sans-serif" font-weight="bold" font-size="39" fill="#fff">iso012800</text>
<text transform="translate(334.0 1187.0) scale(1.135 1) rotate(-90)" text-anchor="middle" font-family="'DejaVu Sans','Liberation Sans',sans-serif" font-size="52.3" fill="#fff">IRE</text>
<rect x="2613.2" y="441.8" width="825.4" height="232" rx="5.5" ry="5.5" fill="#cdcfcd" stroke="#d3d5d3" stroke-width="1.4"/>
<path d="M2627.8 471.2H2714.2" stroke="#fff" stroke-width="3.6"/>
<path d="M2629.5 526.8H2712.5" stroke="#ff260e" stroke-width="6.8" stroke-dasharray="42.6 10.6 6.9 10.2"/>
<path d="M2629.5 582.2H2712.5" stroke="#14e022" stroke-width="6.8" stroke-dasharray="24.6 10.54"/>
<path d="M2626.2 637.5H2715.8" stroke="#0610dd" stroke-width="6.8"/>
<g font-family="'DejaVu Sans','Liberation Sans',sans-serif" font-size="36.2" fill="#000">
<text transform="translate(2744.0 484.4) scale(1.149 1)" text-anchor="start">Patch Intensity</text>
<text transform="translate(2744.0 539.8) scale(1.149 1)" text-anchor="start">SNR Cutoff (strict) (7.04 stops)</text>
<text transform="translate(2744.0 595.3) scale(1.149 1)" text-anchor="start">SNR Cutoff (lenient) (9.33 stops)</text>
<text transform="translate(2744.0 650.7) scale(1.149 1)" text-anchor="start">Background Floor (15.04 stops)</text>
</g>
</svg>
</body></html>
